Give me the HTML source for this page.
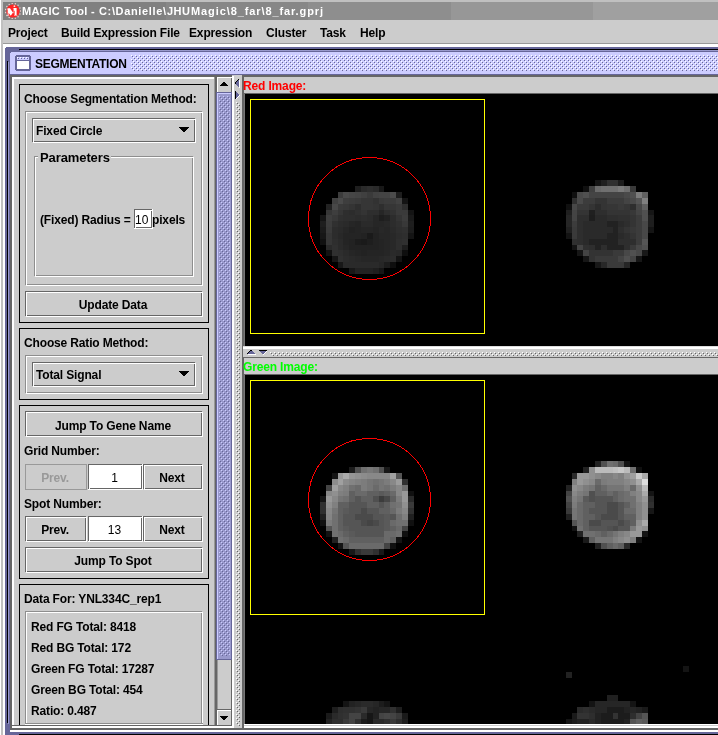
<!DOCTYPE html>
<html><head><meta charset="utf-8"><style>
html,body{margin:0;padding:0;}
body{width:718px;height:735px;overflow:hidden;position:relative;background:#c0c0c0;font-family:"Liberation Sans",sans-serif;}
.a{position:absolute;}
.t{white-space:nowrap;will-change:transform;}
svg{display:block;}
</style></head><body>
<div class="a" style="left:0px;top:0px;width:1px;height:735px;background:#ffffff;"></div>
<div class="a" style="left:3px;top:2px;width:163px;height:18px;background:#808080;"></div>
<div class="a" style="left:166px;top:2px;width:142px;height:18px;background:#878787;"></div>
<div class="a" style="left:308px;top:2px;width:143px;height:18px;background:#8e8e8e;"></div>
<div class="a" style="left:451px;top:2px;width:142px;height:18px;background:#979797;"></div>
<div class="a" style="left:593px;top:2px;width:125px;height:18px;background:#a0a0a0;"></div>
<svg class="a" style="left:5px;top:3px" width="16" height="16" viewBox="0 0 16 16">
<circle cx="15.60" cy="8.00" r="0.75" fill="#f4c8c8"/><circle cx="14.94" cy="11.09" r="0.75" fill="#f4c8c8"/><circle cx="13.09" cy="13.65" r="0.75" fill="#f4c8c8"/><circle cx="10.35" cy="15.23" r="0.75" fill="#f4c8c8"/><circle cx="7.21" cy="15.56" r="0.75" fill="#f4c8c8"/><circle cx="4.20" cy="14.58" r="0.75" fill="#f4c8c8"/><circle cx="1.85" cy="12.47" r="0.75" fill="#f4c8c8"/><circle cx="0.57" cy="9.58" r="0.75" fill="#f4c8c8"/><circle cx="0.57" cy="6.42" r="0.75" fill="#f4c8c8"/><circle cx="1.85" cy="3.53" r="0.75" fill="#f4c8c8"/><circle cx="4.20" cy="1.42" r="0.75" fill="#f4c8c8"/><circle cx="7.21" cy="0.44" r="0.75" fill="#f4c8c8"/><circle cx="10.35" cy="0.77" r="0.75" fill="#f4c8c8"/><circle cx="13.09" cy="2.35" r="0.75" fill="#f4c8c8"/><circle cx="14.94" cy="4.91" r="0.75" fill="#f4c8c8"/>
<circle cx="8" cy="8" r="6.6" fill="#ff2424"/>
<path d="M2.6 5.2h2.4l3.6 5.2v-5.2h-0.8v-0.1h3.8v6.9h0.8v0.6h-3.4v-0.6h0.6v-4.6l-0.1 0l-3.6 5.2h-0.4l-1.9-2.8v2.2h0.7v0.6h-2.2v-0.6h0.6v-5.6h-0.5z" fill="#fff"/>
<circle cx="9.4" cy="3.2" r="0.9" fill="#ffe0d0"/>
</svg>
<div class="a t" style="left:22px;top:5px;font-size:11px;line-height:13px;font-weight:bold;color:#fff;letter-spacing:0.25px;">MAGIC</div>
<div class="a t" style="left:64px;top:5px;font-size:11px;line-height:13px;font-weight:bold;color:#fff;letter-spacing:0.33px;">Tool</div>
<div class="a t" style="left:91px;top:5px;font-size:11px;line-height:13px;font-weight:bold;color:#fff;letter-spacing:0px;">-</div>
<div class="a t" style="left:99px;top:5px;font-size:11px;line-height:13px;font-weight:bold;color:#fff;letter-spacing:0.64px;">C:\Danielle\</div>
<div class="a t" style="left:167px;top:5px;font-size:11px;line-height:13px;font-weight:bold;color:#fff;letter-spacing:0.5px;">JHU</div>
<div class="a t" style="left:191px;top:5px;font-size:11px;line-height:13px;font-weight:bold;color:#fff;letter-spacing:0.9px;">Magic\8_far\8_far.gprj</div>
<div class="a" style="left:3px;top:20px;width:715px;height:23px;background:#cccccc;"></div>
<div class="a" style="left:3px;top:43px;width:715px;height:1px;background:#999999;"></div>
<div class="a t" style="left:8px;top:26px;font-size:12px;line-height:14px;font-weight:bold;color:#000;letter-spacing:-0.15px;">Project</div>
<div class="a t" style="left:61px;top:26px;font-size:12px;line-height:14px;font-weight:bold;color:#000;letter-spacing:-0.15px;">Build Expression File</div>
<div class="a t" style="left:189px;top:26px;font-size:12px;line-height:14px;font-weight:bold;color:#000;letter-spacing:-0.15px;">Expression</div>
<div class="a t" style="left:266px;top:26px;font-size:12px;line-height:14px;font-weight:bold;color:#000;letter-spacing:-0.15px;">Cluster</div>
<div class="a t" style="left:320px;top:26px;font-size:12px;line-height:14px;font-weight:bold;color:#000;letter-spacing:-0.15px;">Task</div>
<div class="a t" style="left:360px;top:26px;font-size:12px;line-height:14px;font-weight:bold;color:#000;letter-spacing:-0.15px;">Help</div>
<div class="a" style="left:3px;top:44px;width:715px;height:691px;background:#ffffff;"></div>
<div class="a" style="left:5px;top:47px;width:713px;height:688px;background:#666699;"></div>
<div class="a" style="left:5px;top:47px;width:1px;height:1px;background:#ffffff;"></div>
<div class="a" style="left:19px;top:49px;width:699px;height:1px;background:#000;"></div>
<div class="a" style="left:20px;top:50px;width:698px;height:1px;background:#9999cc;"></div>
<div class="a" style="left:7px;top:61px;width:1px;height:662px;background:#000;"></div>
<div class="a" style="left:8px;top:62px;width:1px;height:662px;background:#9999cc;"></div>
<div class="a" style="left:19px;top:734px;width:699px;height:1px;background:#000;"></div>
<div class="a" style="left:10px;top:52px;width:708px;height:23px;background:#ccccff;"></div>
<div class="a" style="left:10px;top:74px;width:708px;height:1px;background:#666699;"></div>
<div class="a" style="left:10px;top:52px;width:1px;height:1px;background:#666699;"></div>
<svg class="a" style="left:15px;top:55px" width="16" height="16" viewBox="0 0 16 16" shape-rendering="crispEdges">
<path d="M1 0h14v1h1v14h-1v1h-14v-1h-1v-14h1z" fill="#666699"/>
<rect x="2" y="2" width="12" height="3" fill="#ccccff"/>
<rect x="2" y="6" width="12" height="8" fill="#fff"/>
<rect x="2" y="2" width="1" height="1" fill="#fff"/><rect x="5" y="2" width="1" height="1" fill="#fff"/><rect x="8" y="2" width="1" height="1" fill="#fff"/><rect x="11" y="2" width="1" height="1" fill="#fff"/>
<rect x="3" y="3" width="1" height="1" fill="#666699"/><rect x="6" y="3" width="1" height="1" fill="#666699"/><rect x="9" y="3" width="1" height="1" fill="#666699"/><rect x="12" y="3" width="1" height="1" fill="#666699"/>
</svg>
<div class="a t" style="left:35px;top:57px;font-size:12px;line-height:14px;font-weight:bold;color:#000;letter-spacing:-0.27px;">SEGMENTATION</div>
<svg class="a" style="left:131px;top:55px" width="587" height="16" shape-rendering="crispEdges"><defs><pattern id="tb" width="4" height="4" patternUnits="userSpaceOnUse"><rect x="0" y="0" width="1" height="1" fill="#ffffff"/><rect x="2" y="2" width="1" height="1" fill="#ffffff"/><rect x="1" y="1" width="1" height="1" fill="#666699"/><rect x="3" y="3" width="1" height="1" fill="#666699"/></pattern></defs><rect width="587" height="16" fill="url(#tb)"/></svg>
<div class="a" style="left:10px;top:75px;width:708px;height:657px;background:#cccccc;"></div>
<div class="a" style="left:10px;top:75px;width:708px;height:1px;background:#666666;"></div>
<div class="a" style="left:10px;top:76px;width:708px;height:1px;background:#666666;"></div>
<div class="a" style="left:10px;top:75px;width:1px;height:655px;background:#666666;"></div>
<div class="a" style="left:11px;top:75px;width:1px;height:655px;background:#666666;"></div>
<div class="a" style="left:10px;top:728px;width:708px;height:1px;background:#666666;"></div>
<div class="a" style="left:10px;top:729px;width:708px;height:1px;background:#666666;"></div>
<div class="a" style="left:10px;top:730px;width:708px;height:1px;background:#ffffff;"></div>
<div class="a" style="left:10px;top:731px;width:708px;height:1px;background:#ffffff;"></div>
<div class="a" style="left:12px;top:77px;width:203px;height:1px;background:#ffffff;"></div>
<div class="a" style="left:12px;top:78px;width:203px;height:1px;background:#ffffff;"></div>
<div class="a" style="left:12px;top:77px;width:1px;height:651px;background:#ffffff;"></div>
<div class="a" style="left:13px;top:77px;width:1px;height:651px;background:#ffffff;"></div>
<div class="a" style="left:12px;top:725px;width:220px;height:1px;background:#666666;"></div>
<div class="a" style="left:12px;top:726px;width:706px;height:1px;background:#ffffff;"></div>
<div class="a" style="left:12px;top:727px;width:706px;height:1px;background:#ffffff;"></div>
<div class="a" style="left:19px;top:84px;width:190px;height:1px;background:#000;"></div>
<div class="a" style="left:19px;top:322px;width:190px;height:1px;background:#000;"></div>
<div class="a" style="left:19px;top:84px;width:1px;height:239px;background:#000;"></div>
<div class="a" style="left:208px;top:84px;width:1px;height:239px;background:#000;"></div>
<div class="a t" style="left:24px;top:92px;font-size:12px;line-height:14px;font-weight:bold;color:#000;letter-spacing:-0.15px;">Choose Segmentation Method:</div>
<div class="a" style="left:25px;top:111px;width:177px;height:1px;background:#8e8e8e;"></div>
<div class="a" style="left:25px;top:284px;width:177px;height:1px;background:#8e8e8e;"></div>
<div class="a" style="left:25px;top:111px;width:1px;height:174px;background:#8e8e8e;"></div>
<div class="a" style="left:201px;top:111px;width:1px;height:174px;background:#8e8e8e;"></div>
<div class="a" style="left:26px;top:112px;width:177px;height:1px;background:#ffffff;"></div>
<div class="a" style="left:26px;top:285px;width:177px;height:1px;background:#ffffff;"></div>
<div class="a" style="left:26px;top:112px;width:1px;height:174px;background:#ffffff;"></div>
<div class="a" style="left:202px;top:112px;width:1px;height:174px;background:#ffffff;"></div>
<div class="a" style="left:32px;top:118px;width:163px;height:1px;background:#666666;"></div>
<div class="a" style="left:32px;top:141px;width:163px;height:1px;background:#666666;"></div>
<div class="a" style="left:32px;top:118px;width:1px;height:24px;background:#666666;"></div>
<div class="a" style="left:194px;top:118px;width:1px;height:24px;background:#666666;"></div>
<div class="a" style="left:33px;top:119px;width:163px;height:1px;background:#ffffff;"></div>
<div class="a" style="left:33px;top:142px;width:163px;height:1px;background:#ffffff;"></div>
<div class="a" style="left:33px;top:119px;width:1px;height:24px;background:#ffffff;"></div>
<div class="a" style="left:195px;top:119px;width:1px;height:24px;background:#ffffff;"></div>
<div class="a t" style="left:36px;top:124px;font-size:12px;line-height:14px;font-weight:bold;color:#000;letter-spacing:-0.15px;">Fixed Circle</div>
<div class="a" style="left:179px;top:127px;width:10px;height:1px;background:#000;"></div>
<div class="a" style="left:180px;top:128px;width:8px;height:1px;background:#000;"></div>
<div class="a" style="left:181px;top:129px;width:6px;height:1px;background:#000;"></div>
<div class="a" style="left:182px;top:130px;width:4px;height:1px;background:#000;"></div>
<div class="a" style="left:183px;top:131px;width:2px;height:1px;background:#000;"></div>
<div class="a" style="left:34px;top:156px;width:159px;height:1px;background:#8e8e8e;"></div>
<div class="a" style="left:34px;top:275px;width:159px;height:1px;background:#8e8e8e;"></div>
<div class="a" style="left:34px;top:156px;width:1px;height:120px;background:#8e8e8e;"></div>
<div class="a" style="left:192px;top:156px;width:1px;height:120px;background:#8e8e8e;"></div>
<div class="a" style="left:35px;top:157px;width:159px;height:1px;background:#ffffff;"></div>
<div class="a" style="left:35px;top:276px;width:159px;height:1px;background:#ffffff;"></div>
<div class="a" style="left:35px;top:157px;width:1px;height:120px;background:#ffffff;"></div>
<div class="a" style="left:193px;top:157px;width:1px;height:120px;background:#ffffff;"></div>
<div class="a" style="left:38px;top:150px;width:73px;height:12px;background:#cccccc;"></div>
<div class="a t" style="left:40px;top:150px;font-size:13px;line-height:15px;font-weight:bold;color:#000;letter-spacing:-0.1px;">Parameters</div>
<div class="a t" style="left:40px;top:213px;font-size:12px;line-height:14px;font-weight:bold;color:#000;letter-spacing:-0.15px;">(Fixed) Radius = </div>
<div class="a" style="left:134px;top:209px;width:19px;height:20px;background:#ffffff;"></div>
<div class="a" style="left:134px;top:209px;width:18px;height:1px;background:#666666;"></div>
<div class="a" style="left:134px;top:227px;width:18px;height:1px;background:#666666;"></div>
<div class="a" style="left:134px;top:209px;width:1px;height:19px;background:#666666;"></div>
<div class="a" style="left:151px;top:209px;width:1px;height:19px;background:#666666;"></div>
<div class="a" style="left:135px;top:210px;width:18px;height:1px;background:#ffffff;"></div>
<div class="a" style="left:135px;top:228px;width:18px;height:1px;background:#ffffff;"></div>
<div class="a" style="left:135px;top:210px;width:1px;height:19px;background:#ffffff;"></div>
<div class="a" style="left:152px;top:210px;width:1px;height:19px;background:#ffffff;"></div>
<div class="a t" style="left:135px;top:213px;font-size:12px;line-height:14px;font-weight:normal;color:#000;letter-spacing:0px;">10</div>
<div class="a t" style="left:152px;top:213px;font-size:12px;line-height:14px;font-weight:bold;color:#000;letter-spacing:-0.15px;">pixels</div>
<div class="a" style="left:25px;top:291px;width:177px;height:1px;background:#666666;"></div>
<div class="a" style="left:25px;top:315px;width:177px;height:1px;background:#666666;"></div>
<div class="a" style="left:25px;top:291px;width:1px;height:25px;background:#666666;"></div>
<div class="a" style="left:201px;top:291px;width:1px;height:25px;background:#666666;"></div>
<div class="a" style="left:26px;top:292px;width:177px;height:1px;background:#ffffff;"></div>
<div class="a" style="left:26px;top:316px;width:177px;height:1px;background:#ffffff;"></div>
<div class="a" style="left:26px;top:292px;width:1px;height:25px;background:#ffffff;"></div>
<div class="a" style="left:202px;top:292px;width:1px;height:25px;background:#ffffff;"></div>
<div class="a t" style="left:24px;width:178px;text-align:center;top:298px;font-size:12px;line-height:14px;font-weight:bold;color:#000;letter-spacing:-0.15px;">Update Data</div>
<div class="a" style="left:19px;top:328px;width:190px;height:1px;background:#000;"></div>
<div class="a" style="left:19px;top:399px;width:190px;height:1px;background:#000;"></div>
<div class="a" style="left:19px;top:328px;width:1px;height:72px;background:#000;"></div>
<div class="a" style="left:208px;top:328px;width:1px;height:72px;background:#000;"></div>
<div class="a t" style="left:24px;top:336px;font-size:12px;line-height:14px;font-weight:bold;color:#000;letter-spacing:-0.15px;">Choose Ratio Method:</div>
<div class="a" style="left:25px;top:355px;width:177px;height:1px;background:#8e8e8e;"></div>
<div class="a" style="left:25px;top:392px;width:177px;height:1px;background:#8e8e8e;"></div>
<div class="a" style="left:25px;top:355px;width:1px;height:38px;background:#8e8e8e;"></div>
<div class="a" style="left:201px;top:355px;width:1px;height:38px;background:#8e8e8e;"></div>
<div class="a" style="left:26px;top:356px;width:177px;height:1px;background:#ffffff;"></div>
<div class="a" style="left:26px;top:393px;width:177px;height:1px;background:#ffffff;"></div>
<div class="a" style="left:26px;top:356px;width:1px;height:38px;background:#ffffff;"></div>
<div class="a" style="left:202px;top:356px;width:1px;height:38px;background:#ffffff;"></div>
<div class="a" style="left:32px;top:362px;width:163px;height:1px;background:#666666;"></div>
<div class="a" style="left:32px;top:385px;width:163px;height:1px;background:#666666;"></div>
<div class="a" style="left:32px;top:362px;width:1px;height:24px;background:#666666;"></div>
<div class="a" style="left:194px;top:362px;width:1px;height:24px;background:#666666;"></div>
<div class="a" style="left:33px;top:363px;width:163px;height:1px;background:#ffffff;"></div>
<div class="a" style="left:33px;top:386px;width:163px;height:1px;background:#ffffff;"></div>
<div class="a" style="left:33px;top:363px;width:1px;height:24px;background:#ffffff;"></div>
<div class="a" style="left:195px;top:363px;width:1px;height:24px;background:#ffffff;"></div>
<div class="a t" style="left:36px;top:368px;font-size:12px;line-height:14px;font-weight:bold;color:#000;letter-spacing:-0.15px;">Total Signal</div>
<div class="a" style="left:179px;top:371px;width:10px;height:1px;background:#000;"></div>
<div class="a" style="left:180px;top:372px;width:8px;height:1px;background:#000;"></div>
<div class="a" style="left:181px;top:373px;width:6px;height:1px;background:#000;"></div>
<div class="a" style="left:182px;top:374px;width:4px;height:1px;background:#000;"></div>
<div class="a" style="left:183px;top:375px;width:2px;height:1px;background:#000;"></div>
<div class="a" style="left:19px;top:405px;width:190px;height:1px;background:#000;"></div>
<div class="a" style="left:19px;top:578px;width:190px;height:1px;background:#000;"></div>
<div class="a" style="left:19px;top:405px;width:1px;height:174px;background:#000;"></div>
<div class="a" style="left:208px;top:405px;width:1px;height:174px;background:#000;"></div>
<div class="a" style="left:25px;top:411px;width:177px;height:1px;background:#666666;"></div>
<div class="a" style="left:25px;top:435px;width:177px;height:1px;background:#666666;"></div>
<div class="a" style="left:25px;top:411px;width:1px;height:25px;background:#666666;"></div>
<div class="a" style="left:201px;top:411px;width:1px;height:25px;background:#666666;"></div>
<div class="a" style="left:26px;top:412px;width:177px;height:1px;background:#ffffff;"></div>
<div class="a" style="left:26px;top:436px;width:177px;height:1px;background:#ffffff;"></div>
<div class="a" style="left:26px;top:412px;width:1px;height:25px;background:#ffffff;"></div>
<div class="a" style="left:202px;top:412px;width:1px;height:25px;background:#ffffff;"></div>
<div class="a t" style="left:24px;width:178px;text-align:center;top:419px;font-size:12px;line-height:14px;font-weight:bold;color:#000;letter-spacing:-0.15px;">Jump To Gene Name</div>
<div class="a t" style="left:24px;top:444px;font-size:12px;line-height:14px;font-weight:bold;color:#000;letter-spacing:-0.15px;">Grid Number:</div>
<div class="a" style="left:25px;top:464px;width:62px;height:1px;background:#999999;"></div>
<div class="a" style="left:25px;top:489px;width:62px;height:1px;background:#999999;"></div>
<div class="a" style="left:25px;top:464px;width:1px;height:26px;background:#999999;"></div>
<div class="a" style="left:86px;top:464px;width:1px;height:26px;background:#999999;"></div>
<div class="a t" style="left:24px;width:62px;text-align:center;top:471px;font-size:12px;line-height:14px;font-weight:bold;color:#999999;letter-spacing:-0.15px;">Prev.</div>
<div class="a" style="left:88px;top:464px;width:55px;height:26px;background:#ffffff;"></div>
<div class="a" style="left:88px;top:464px;width:54px;height:1px;background:#666666;"></div>
<div class="a" style="left:88px;top:488px;width:54px;height:1px;background:#666666;"></div>
<div class="a" style="left:88px;top:464px;width:1px;height:25px;background:#666666;"></div>
<div class="a" style="left:141px;top:464px;width:1px;height:25px;background:#666666;"></div>
<div class="a" style="left:89px;top:465px;width:54px;height:1px;background:#ffffff;"></div>
<div class="a" style="left:89px;top:489px;width:54px;height:1px;background:#ffffff;"></div>
<div class="a" style="left:89px;top:465px;width:1px;height:25px;background:#ffffff;"></div>
<div class="a" style="left:142px;top:465px;width:1px;height:25px;background:#ffffff;"></div>
<div class="a t" style="left:87px;width:55px;text-align:center;top:471px;font-size:12px;line-height:14px;font-weight:normal;color:#000;letter-spacing:0px;">1</div>
<div class="a" style="left:143px;top:464px;width:59px;height:1px;background:#666666;"></div>
<div class="a" style="left:143px;top:488px;width:59px;height:1px;background:#666666;"></div>
<div class="a" style="left:143px;top:464px;width:1px;height:25px;background:#666666;"></div>
<div class="a" style="left:201px;top:464px;width:1px;height:25px;background:#666666;"></div>
<div class="a" style="left:144px;top:465px;width:59px;height:1px;background:#ffffff;"></div>
<div class="a" style="left:144px;top:489px;width:59px;height:1px;background:#ffffff;"></div>
<div class="a" style="left:144px;top:465px;width:1px;height:25px;background:#ffffff;"></div>
<div class="a" style="left:202px;top:465px;width:1px;height:25px;background:#ffffff;"></div>
<div class="a t" style="left:142px;width:60px;text-align:center;top:471px;font-size:12px;line-height:14px;font-weight:bold;color:#000;letter-spacing:-0.15px;">Next</div>
<div class="a t" style="left:24px;top:497px;font-size:12px;line-height:14px;font-weight:bold;color:#000;letter-spacing:-0.15px;">Spot Number:</div>
<div class="a" style="left:25px;top:516px;width:61px;height:1px;background:#666666;"></div>
<div class="a" style="left:25px;top:540px;width:61px;height:1px;background:#666666;"></div>
<div class="a" style="left:25px;top:516px;width:1px;height:25px;background:#666666;"></div>
<div class="a" style="left:85px;top:516px;width:1px;height:25px;background:#666666;"></div>
<div class="a" style="left:26px;top:517px;width:61px;height:1px;background:#ffffff;"></div>
<div class="a" style="left:26px;top:541px;width:61px;height:1px;background:#ffffff;"></div>
<div class="a" style="left:26px;top:517px;width:1px;height:25px;background:#ffffff;"></div>
<div class="a" style="left:86px;top:517px;width:1px;height:25px;background:#ffffff;"></div>
<div class="a t" style="left:24px;width:62px;text-align:center;top:523px;font-size:12px;line-height:14px;font-weight:bold;color:#000;letter-spacing:-0.15px;">Prev.</div>
<div class="a" style="left:88px;top:516px;width:55px;height:26px;background:#ffffff;"></div>
<div class="a" style="left:88px;top:516px;width:54px;height:1px;background:#666666;"></div>
<div class="a" style="left:88px;top:540px;width:54px;height:1px;background:#666666;"></div>
<div class="a" style="left:88px;top:516px;width:1px;height:25px;background:#666666;"></div>
<div class="a" style="left:141px;top:516px;width:1px;height:25px;background:#666666;"></div>
<div class="a" style="left:89px;top:517px;width:54px;height:1px;background:#ffffff;"></div>
<div class="a" style="left:89px;top:541px;width:54px;height:1px;background:#ffffff;"></div>
<div class="a" style="left:89px;top:517px;width:1px;height:25px;background:#ffffff;"></div>
<div class="a" style="left:142px;top:517px;width:1px;height:25px;background:#ffffff;"></div>
<div class="a t" style="left:87px;width:55px;text-align:center;top:523px;font-size:12px;line-height:14px;font-weight:normal;color:#000;letter-spacing:0px;">13</div>
<div class="a" style="left:143px;top:516px;width:59px;height:1px;background:#666666;"></div>
<div class="a" style="left:143px;top:540px;width:59px;height:1px;background:#666666;"></div>
<div class="a" style="left:143px;top:516px;width:1px;height:25px;background:#666666;"></div>
<div class="a" style="left:201px;top:516px;width:1px;height:25px;background:#666666;"></div>
<div class="a" style="left:144px;top:517px;width:59px;height:1px;background:#ffffff;"></div>
<div class="a" style="left:144px;top:541px;width:59px;height:1px;background:#ffffff;"></div>
<div class="a" style="left:144px;top:517px;width:1px;height:25px;background:#ffffff;"></div>
<div class="a" style="left:202px;top:517px;width:1px;height:25px;background:#ffffff;"></div>
<div class="a t" style="left:142px;width:60px;text-align:center;top:523px;font-size:12px;line-height:14px;font-weight:bold;color:#000;letter-spacing:-0.15px;">Next</div>
<div class="a" style="left:25px;top:547px;width:177px;height:1px;background:#666666;"></div>
<div class="a" style="left:25px;top:571px;width:177px;height:1px;background:#666666;"></div>
<div class="a" style="left:25px;top:547px;width:1px;height:25px;background:#666666;"></div>
<div class="a" style="left:201px;top:547px;width:1px;height:25px;background:#666666;"></div>
<div class="a" style="left:26px;top:548px;width:177px;height:1px;background:#ffffff;"></div>
<div class="a" style="left:26px;top:572px;width:177px;height:1px;background:#ffffff;"></div>
<div class="a" style="left:26px;top:548px;width:1px;height:25px;background:#ffffff;"></div>
<div class="a" style="left:202px;top:548px;width:1px;height:25px;background:#ffffff;"></div>
<div class="a t" style="left:24px;width:178px;text-align:center;top:554px;font-size:12px;line-height:14px;font-weight:bold;color:#000;letter-spacing:-0.15px;">Jump To Spot</div>
<div class="a" style="left:14px;top:584px;width:200px;height:141px;background:#cccccc;"></div>
<div class="a" style="left:19px;top:584px;width:190px;height:1px;background:#000;"></div>
<div class="a" style="left:19px;top:584px;width:1px;height:141px;background:#000;"></div>
<div class="a" style="left:208px;top:584px;width:1px;height:141px;background:#000;"></div>
<div class="a t" style="left:24px;top:592px;font-size:12px;line-height:14px;font-weight:bold;color:#000;letter-spacing:-0.15px;">Data For: YNL334C_rep1</div>
<div class="a" style="left:25px;top:611px;width:177px;height:1px;background:#8e8e8e;"></div>
<div class="a" style="left:25px;top:611px;width:1px;height:113px;background:#8e8e8e;"></div>
<div class="a" style="left:201px;top:611px;width:1px;height:113px;background:#8e8e8e;"></div>
<div class="a" style="left:26px;top:612px;width:177px;height:1px;background:#ffffff;"></div>
<div class="a" style="left:26px;top:612px;width:1px;height:113px;background:#ffffff;"></div>
<div class="a" style="left:202px;top:612px;width:1px;height:113px;background:#ffffff;"></div>
<div class="a" style="left:25px;top:723px;width:178px;height:1px;background:#8e8e8e;"></div>
<div class="a" style="left:25px;top:724px;width:178px;height:1px;background:#ffffff;"></div>
<div class="a t" style="left:31px;top:620px;font-size:12px;line-height:14px;font-weight:bold;color:#000;letter-spacing:-0.15px;">Red FG Total: 8418</div>
<div class="a t" style="left:31px;top:641px;font-size:12px;line-height:14px;font-weight:bold;color:#000;letter-spacing:-0.15px;">Red BG Total: 172</div>
<div class="a t" style="left:31px;top:662px;font-size:12px;line-height:14px;font-weight:bold;color:#000;letter-spacing:-0.15px;">Green FG Total: 17287</div>
<div class="a t" style="left:31px;top:683px;font-size:12px;line-height:14px;font-weight:bold;color:#000;letter-spacing:-0.15px;">Green BG Total: 454</div>
<div class="a t" style="left:31px;top:704px;font-size:12px;line-height:14px;font-weight:bold;color:#000;letter-spacing:-0.15px;">Ratio: 0.487</div>
<div class="a" style="left:12px;top:725px;width:220px;height:1px;background:#666666;"></div>
<div class="a" style="left:214px;top:77px;width:1px;height:648px;background:#999999;"></div>
<div class="a" style="left:215px;top:77px;width:1px;height:648px;background:#666666;"></div>
<div class="a" style="left:216px;top:77px;width:1px;height:648px;background:#666666;"></div>
<div class="a" style="left:217px;top:92px;width:1px;height:617px;background:#999999;"></div>
<div class="a" style="left:231px;top:78px;width:1px;height:647px;background:#666666;"></div>
<div class="a" style="left:217px;top:77px;width:14px;height:15px;background:#cccccc;"></div>
<div class="a" style="left:217px;top:77px;width:15px;height:1px;background:#ffffff;"></div>
<div class="a" style="left:217px;top:77px;width:1px;height:15px;background:#ffffff;"></div>
<div class="a" style="left:223px;top:82px;width:2px;height:1px;background:#000;"></div>
<div class="a" style="left:222px;top:83px;width:4px;height:1px;background:#000;"></div>
<div class="a" style="left:221px;top:84px;width:6px;height:1px;background:#000;"></div>
<div class="a" style="left:220px;top:85px;width:8px;height:1px;background:#000;"></div>
<div class="a" style="left:216px;top:92px;width:16px;height:568px;background:#9999cc;"></div>
<div class="a" style="left:216px;top:92px;width:16px;height:1px;background:#666699;"></div>
<div class="a" style="left:216px;top:659px;width:16px;height:1px;background:#666699;"></div>
<div class="a" style="left:216px;top:92px;width:1px;height:568px;background:#666699;"></div>
<div class="a" style="left:231px;top:92px;width:1px;height:568px;background:#666699;"></div>
<div class="a" style="left:217px;top:93px;width:14px;height:1px;background:#ccccff;"></div>
<div class="a" style="left:217px;top:93px;width:1px;height:566px;background:#ccccff;"></div>
<svg class="a" style="left:219px;top:96px" width="11" height="560" shape-rendering="crispEdges"><defs><pattern id="sb" width="4" height="4" patternUnits="userSpaceOnUse"><rect x="0" y="0" width="1" height="1" fill="#ccccff"/><rect x="2" y="2" width="1" height="1" fill="#ccccff"/><rect x="1" y="1" width="1" height="1" fill="#666699"/><rect x="3" y="3" width="1" height="1" fill="#666699"/></pattern></defs><rect width="11" height="560" fill="url(#sb)"/></svg>
<div class="a" style="left:217px;top:710px;width:14px;height:14px;background:#cccccc;"></div>
<div class="a" style="left:215px;top:709px;width:17px;height:1px;background:#666666;"></div>
<div class="a" style="left:217px;top:710px;width:14px;height:1px;background:#ffffff;"></div>
<div class="a" style="left:217px;top:710px;width:1px;height:15px;background:#ffffff;"></div>
<div class="a" style="left:220px;top:716px;width:8px;height:1px;background:#000;"></div>
<div class="a" style="left:221px;top:717px;width:6px;height:1px;background:#000;"></div>
<div class="a" style="left:222px;top:718px;width:4px;height:1px;background:#000;"></div>
<div class="a" style="left:223px;top:719px;width:2px;height:1px;background:#000;"></div>
<div class="a" style="left:232px;top:75px;width:10px;height:653px;background:#cccccc;"></div>
<div class="a" style="left:232px;top:76px;width:1px;height:652px;background:#ffffff;"></div>
<div class="a" style="left:233px;top:76px;width:1px;height:652px;background:#ffffff;"></div>
<svg class="a" style="left:236px;top:102px" width="4" height="624" shape-rendering="crispEdges"><defs><pattern id="dv" width="4" height="4" patternUnits="userSpaceOnUse"><rect x="0" y="0" width="1" height="1" fill="#ffffff"/><rect x="2" y="2" width="1" height="1" fill="#ffffff"/><rect x="1" y="1" width="1" height="1" fill="#666666"/><rect x="3" y="3" width="1" height="1" fill="#666666"/></pattern></defs><rect width="4" height="624" fill="url(#dv)"/></svg>
<div class="a" style="left:235px;top:82px;width:1px;height:1px;background:#000;"></div>
<div class="a" style="left:235px;top:83px;width:1px;height:1px;background:#000;"></div>
<div class="a" style="left:236px;top:81px;width:1px;height:1px;background:#000;"></div>
<div class="a" style="left:236px;top:82px;width:1px;height:1px;background:#666699;"></div>
<div class="a" style="left:236px;top:83px;width:1px;height:1px;background:#666699;"></div>
<div class="a" style="left:236px;top:84px;width:1px;height:1px;background:#666699;"></div>
<div class="a" style="left:237px;top:80px;width:1px;height:1px;background:#000;"></div>
<div class="a" style="left:237px;top:81px;width:1px;height:1px;background:#666699;"></div>
<div class="a" style="left:237px;top:82px;width:1px;height:1px;background:#666699;"></div>
<div class="a" style="left:237px;top:83px;width:1px;height:1px;background:#666699;"></div>
<div class="a" style="left:237px;top:84px;width:1px;height:1px;background:#666699;"></div>
<div class="a" style="left:237px;top:85px;width:1px;height:1px;background:#666699;"></div>
<div class="a" style="left:238px;top:79px;width:1px;height:1px;background:#000;"></div>
<div class="a" style="left:238px;top:80px;width:1px;height:1px;background:#666699;"></div>
<div class="a" style="left:238px;top:81px;width:1px;height:1px;background:#666699;"></div>
<div class="a" style="left:238px;top:82px;width:1px;height:1px;background:#666699;"></div>
<div class="a" style="left:238px;top:83px;width:1px;height:1px;background:#666699;"></div>
<div class="a" style="left:238px;top:84px;width:1px;height:1px;background:#666699;"></div>
<div class="a" style="left:238px;top:85px;width:1px;height:1px;background:#666699;"></div>
<div class="a" style="left:238px;top:86px;width:1px;height:1px;background:#666699;"></div>
<div class="a" style="left:239px;top:80px;width:1px;height:1px;background:#ffffff;"></div>
<div class="a" style="left:239px;top:81px;width:1px;height:1px;background:#ffffff;"></div>
<div class="a" style="left:239px;top:82px;width:1px;height:1px;background:#ffffff;"></div>
<div class="a" style="left:239px;top:83px;width:1px;height:1px;background:#ffffff;"></div>
<div class="a" style="left:239px;top:84px;width:1px;height:1px;background:#ffffff;"></div>
<div class="a" style="left:239px;top:85px;width:1px;height:1px;background:#ffffff;"></div>
<div class="a" style="left:239px;top:86px;width:1px;height:1px;background:#ffffff;"></div>
<div class="a" style="left:239px;top:87px;width:1px;height:1px;background:#ffffff;"></div>
<div class="a" style="left:235px;top:91px;width:1px;height:1px;background:#000;"></div>
<div class="a" style="left:235px;top:92px;width:1px;height:1px;background:#000;"></div>
<div class="a" style="left:235px;top:93px;width:1px;height:1px;background:#000;"></div>
<div class="a" style="left:235px;top:94px;width:1px;height:1px;background:#000;"></div>
<div class="a" style="left:235px;top:95px;width:1px;height:1px;background:#000;"></div>
<div class="a" style="left:235px;top:96px;width:1px;height:1px;background:#000;"></div>
<div class="a" style="left:235px;top:97px;width:1px;height:1px;background:#000;"></div>
<div class="a" style="left:235px;top:98px;width:1px;height:1px;background:#000;"></div>
<div class="a" style="left:236px;top:92px;width:1px;height:1px;background:#666699;"></div>
<div class="a" style="left:236px;top:93px;width:1px;height:1px;background:#666699;"></div>
<div class="a" style="left:236px;top:94px;width:1px;height:1px;background:#666699;"></div>
<div class="a" style="left:236px;top:95px;width:1px;height:1px;background:#666699;"></div>
<div class="a" style="left:236px;top:96px;width:1px;height:1px;background:#666699;"></div>
<div class="a" style="left:236px;top:97px;width:1px;height:1px;background:#666699;"></div>
<div class="a" style="left:236px;top:98px;width:1px;height:1px;background:#ffffff;"></div>
<div class="a" style="left:237px;top:93px;width:1px;height:1px;background:#666699;"></div>
<div class="a" style="left:237px;top:94px;width:1px;height:1px;background:#666699;"></div>
<div class="a" style="left:237px;top:95px;width:1px;height:1px;background:#666699;"></div>
<div class="a" style="left:237px;top:96px;width:1px;height:1px;background:#666699;"></div>
<div class="a" style="left:237px;top:97px;width:1px;height:1px;background:#ffffff;"></div>
<div class="a" style="left:238px;top:94px;width:1px;height:1px;background:#666699;"></div>
<div class="a" style="left:238px;top:95px;width:1px;height:1px;background:#666699;"></div>
<div class="a" style="left:238px;top:96px;width:1px;height:1px;background:#ffffff;"></div>
<div class="a" style="left:239px;top:95px;width:1px;height:1px;background:#ffffff;"></div>
<div class="a" style="left:242px;top:75px;width:1px;height:655px;background:#666666;"></div>
<div class="a" style="left:243px;top:75px;width:1px;height:655px;background:#666666;"></div>
<div class="a" style="left:244px;top:77px;width:474px;height:16px;background:#cccccc;"></div>
<div class="a t" style="left:243px;top:79px;font-size:12px;line-height:14px;font-weight:bold;color:#ff0000;letter-spacing:-0.15px;">Red Image:</div>
<div class="a" style="left:244px;top:93px;width:474px;height:253px;background:#000;"></div>
<div class="a" style="left:243px;top:93px;width:475px;height:1px;background:#666666;"></div>
<div class="a" style="left:244px;top:94px;width:1px;height:252px;background:#777777;"></div>
<div class="a" style="left:243px;top:346px;width:475px;height:12px;background:#cccccc;"></div>
<div class="a" style="left:243px;top:346px;width:475px;height:1px;background:#dddddd;"></div>
<div class="a" style="left:243px;top:347px;width:475px;height:1px;background:#ffffff;"></div>
<div class="a" style="left:243px;top:348px;width:475px;height:1px;background:#ffffff;"></div>
<div class="a" style="left:243px;top:357px;width:475px;height:1px;background:#666666;"></div>
<div class="a" style="left:250px;top:350px;width:1px;height:1px;background:#000;"></div>
<div class="a" style="left:251px;top:350px;width:1px;height:1px;background:#000;"></div>
<div class="a" style="left:249px;top:351px;width:1px;height:1px;background:#000;"></div>
<div class="a" style="left:250px;top:351px;width:1px;height:1px;background:#666699;"></div>
<div class="a" style="left:251px;top:351px;width:1px;height:1px;background:#666699;"></div>
<div class="a" style="left:252px;top:351px;width:1px;height:1px;background:#666699;"></div>
<div class="a" style="left:248px;top:352px;width:1px;height:1px;background:#000;"></div>
<div class="a" style="left:249px;top:352px;width:1px;height:1px;background:#666699;"></div>
<div class="a" style="left:250px;top:352px;width:1px;height:1px;background:#666699;"></div>
<div class="a" style="left:251px;top:352px;width:1px;height:1px;background:#666699;"></div>
<div class="a" style="left:252px;top:352px;width:1px;height:1px;background:#666699;"></div>
<div class="a" style="left:253px;top:352px;width:1px;height:1px;background:#666699;"></div>
<div class="a" style="left:247px;top:353px;width:1px;height:1px;background:#000;"></div>
<div class="a" style="left:248px;top:353px;width:1px;height:1px;background:#666699;"></div>
<div class="a" style="left:249px;top:353px;width:1px;height:1px;background:#666699;"></div>
<div class="a" style="left:250px;top:353px;width:1px;height:1px;background:#666699;"></div>
<div class="a" style="left:251px;top:353px;width:1px;height:1px;background:#666699;"></div>
<div class="a" style="left:252px;top:353px;width:1px;height:1px;background:#666699;"></div>
<div class="a" style="left:253px;top:353px;width:1px;height:1px;background:#666699;"></div>
<div class="a" style="left:254px;top:353px;width:1px;height:1px;background:#666699;"></div>
<div class="a" style="left:248px;top:354px;width:1px;height:1px;background:#ffffff;"></div>
<div class="a" style="left:249px;top:354px;width:1px;height:1px;background:#ffffff;"></div>
<div class="a" style="left:250px;top:354px;width:1px;height:1px;background:#ffffff;"></div>
<div class="a" style="left:251px;top:354px;width:1px;height:1px;background:#ffffff;"></div>
<div class="a" style="left:252px;top:354px;width:1px;height:1px;background:#ffffff;"></div>
<div class="a" style="left:253px;top:354px;width:1px;height:1px;background:#ffffff;"></div>
<div class="a" style="left:254px;top:354px;width:1px;height:1px;background:#ffffff;"></div>
<div class="a" style="left:255px;top:354px;width:1px;height:1px;background:#ffffff;"></div>
<div class="a" style="left:259px;top:350px;width:1px;height:1px;background:#000;"></div>
<div class="a" style="left:260px;top:350px;width:1px;height:1px;background:#000;"></div>
<div class="a" style="left:261px;top:350px;width:1px;height:1px;background:#000;"></div>
<div class="a" style="left:262px;top:350px;width:1px;height:1px;background:#000;"></div>
<div class="a" style="left:263px;top:350px;width:1px;height:1px;background:#000;"></div>
<div class="a" style="left:264px;top:350px;width:1px;height:1px;background:#000;"></div>
<div class="a" style="left:265px;top:350px;width:1px;height:1px;background:#000;"></div>
<div class="a" style="left:266px;top:350px;width:1px;height:1px;background:#000;"></div>
<div class="a" style="left:260px;top:351px;width:1px;height:1px;background:#666699;"></div>
<div class="a" style="left:261px;top:351px;width:1px;height:1px;background:#666699;"></div>
<div class="a" style="left:262px;top:351px;width:1px;height:1px;background:#666699;"></div>
<div class="a" style="left:263px;top:351px;width:1px;height:1px;background:#666699;"></div>
<div class="a" style="left:264px;top:351px;width:1px;height:1px;background:#666699;"></div>
<div class="a" style="left:265px;top:351px;width:1px;height:1px;background:#666699;"></div>
<div class="a" style="left:266px;top:351px;width:1px;height:1px;background:#ffffff;"></div>
<div class="a" style="left:261px;top:352px;width:1px;height:1px;background:#666699;"></div>
<div class="a" style="left:262px;top:352px;width:1px;height:1px;background:#666699;"></div>
<div class="a" style="left:263px;top:352px;width:1px;height:1px;background:#666699;"></div>
<div class="a" style="left:264px;top:352px;width:1px;height:1px;background:#666699;"></div>
<div class="a" style="left:265px;top:352px;width:1px;height:1px;background:#ffffff;"></div>
<div class="a" style="left:262px;top:353px;width:1px;height:1px;background:#666699;"></div>
<div class="a" style="left:263px;top:353px;width:1px;height:1px;background:#666699;"></div>
<div class="a" style="left:264px;top:353px;width:1px;height:1px;background:#ffffff;"></div>
<div class="a" style="left:263px;top:354px;width:1px;height:1px;background:#ffffff;"></div>
<svg class="a" style="left:270px;top:352px" width="448" height="4" shape-rendering="crispEdges"><defs><pattern id="hd" width="4" height="4" patternUnits="userSpaceOnUse"><rect x="0" y="0" width="1" height="1" fill="#ffffff"/><rect x="2" y="2" width="1" height="1" fill="#ffffff"/><rect x="1" y="1" width="1" height="1" fill="#666666"/><rect x="3" y="3" width="1" height="1" fill="#666666"/></pattern></defs><rect width="448" height="4" fill="url(#hd)"/></svg>
<div class="a" style="left:244px;top:358px;width:474px;height:16px;background:#cccccc;"></div>
<div class="a t" style="left:243px;top:360px;font-size:12px;line-height:14px;font-weight:bold;color:#00ff00;letter-spacing:-0.15px;">Green Image:</div>
<div class="a" style="left:244px;top:374px;width:474px;height:350px;background:#000;"></div>
<div class="a" style="left:243px;top:374px;width:475px;height:1px;background:#666666;"></div>
<div class="a" style="left:244px;top:375px;width:1px;height:349px;background:#777777;"></div>
<div class="a" style="left:244px;top:724px;width:474px;height:1px;background:#ffffff;"></div>
<svg class="a" style="left:244px;top:93px" width="474" height="253" shape-rendering="crispEdges"><rect x="111" y="93" width="6" height="6" fill="#1e1e1e"/><rect x="117" y="93" width="6" height="6" fill="#2a2a2a"/><rect x="123" y="93" width="6" height="6" fill="#2e2e2e"/><rect x="129" y="93" width="6" height="6" fill="#2a2a2a"/><rect x="135" y="93" width="5" height="6" fill="#181818"/><rect x="94" y="99" width="5" height="6" fill="#3c3c3c"/><rect x="99" y="99" width="6" height="6" fill="#4a4a4a"/><rect x="105" y="99" width="6" height="6" fill="#464646"/><rect x="111" y="99" width="6" height="6" fill="#444444"/><rect x="117" y="99" width="6" height="6" fill="#404040"/><rect x="123" y="99" width="6" height="6" fill="#3a3a3a"/><rect x="129" y="99" width="6" height="6" fill="#424242"/><rect x="135" y="99" width="5" height="6" fill="#444444"/><rect x="140" y="99" width="6" height="6" fill="#444444"/><rect x="146" y="99" width="6" height="6" fill="#4c4c4c"/><rect x="152" y="99" width="6" height="6" fill="#1e1e1e"/><rect x="88" y="105" width="6" height="6" fill="#404040"/><rect x="94" y="105" width="5" height="6" fill="#4a4a4a"/><rect x="99" y="105" width="6" height="6" fill="#3e3e3e"/><rect x="105" y="105" width="6" height="6" fill="#3c3c3c"/><rect x="111" y="105" width="6" height="6" fill="#3a3a3a"/><rect x="117" y="105" width="6" height="6" fill="#363636"/><rect x="123" y="105" width="6" height="6" fill="#363636"/><rect x="129" y="105" width="6" height="6" fill="#323232"/><rect x="135" y="105" width="5" height="6" fill="#3a3a3a"/><rect x="140" y="105" width="6" height="6" fill="#3c3c3c"/><rect x="146" y="105" width="6" height="6" fill="#3c3c3c"/><rect x="152" y="105" width="6" height="6" fill="#424242"/><rect x="158" y="105" width="6" height="6" fill="#141414"/><rect x="82" y="111" width="6" height="6" fill="#222222"/><rect x="88" y="111" width="6" height="6" fill="#484848"/><rect x="94" y="111" width="5" height="6" fill="#3a3a3a"/><rect x="99" y="111" width="6" height="6" fill="#383838"/><rect x="105" y="111" width="6" height="6" fill="#343434"/><rect x="111" y="111" width="6" height="6" fill="#2e2e2e"/><rect x="117" y="111" width="6" height="6" fill="#363636"/><rect x="123" y="111" width="6" height="6" fill="#363636"/><rect x="129" y="111" width="6" height="6" fill="#343434"/><rect x="135" y="111" width="5" height="6" fill="#2e2e2e"/><rect x="140" y="111" width="6" height="6" fill="#363636"/><rect x="146" y="111" width="6" height="6" fill="#363636"/><rect x="152" y="111" width="6" height="6" fill="#3a3a3a"/><rect x="158" y="111" width="6" height="6" fill="#2e2e2e"/><rect x="82" y="117" width="6" height="5" fill="#363636"/><rect x="88" y="117" width="6" height="5" fill="#3e3e3e"/><rect x="94" y="117" width="5" height="5" fill="#363636"/><rect x="99" y="117" width="6" height="5" fill="#2e2e2e"/><rect x="105" y="117" width="6" height="5" fill="#2c2c2c"/><rect x="111" y="117" width="6" height="5" fill="#303030"/><rect x="117" y="117" width="6" height="5" fill="#343434"/><rect x="123" y="117" width="6" height="5" fill="#2e2e2e"/><rect x="129" y="117" width="6" height="5" fill="#2e2e2e"/><rect x="135" y="117" width="5" height="5" fill="#262626"/><rect x="140" y="117" width="6" height="5" fill="#2e2e2e"/><rect x="146" y="117" width="6" height="5" fill="#323232"/><rect x="152" y="117" width="6" height="5" fill="#3a3a3a"/><rect x="158" y="117" width="6" height="5" fill="#3a3a3a"/><rect x="164" y="117" width="6" height="5" fill="#141414"/><rect x="76" y="122" width="6" height="6" fill="#141414"/><rect x="82" y="122" width="6" height="6" fill="#3e3e3e"/><rect x="88" y="122" width="6" height="6" fill="#383838"/><rect x="94" y="122" width="5" height="6" fill="#303030"/><rect x="99" y="122" width="6" height="6" fill="#2e2e2e"/><rect x="105" y="122" width="6" height="6" fill="#2e2e2e"/><rect x="111" y="122" width="6" height="6" fill="#2c2c2c"/><rect x="117" y="122" width="6" height="6" fill="#2e2e2e"/><rect x="123" y="122" width="6" height="6" fill="#2c2c2c"/><rect x="129" y="122" width="6" height="6" fill="#262626"/><rect x="135" y="122" width="5" height="6" fill="#1e1e1e"/><rect x="140" y="122" width="6" height="6" fill="#222222"/><rect x="146" y="122" width="6" height="6" fill="#2c2c2c"/><rect x="152" y="122" width="6" height="6" fill="#343434"/><rect x="158" y="122" width="6" height="6" fill="#3c3c3c"/><rect x="164" y="122" width="6" height="6" fill="#1a1a1a"/><rect x="76" y="128" width="6" height="6" fill="#1e1e1e"/><rect x="82" y="128" width="6" height="6" fill="#3c3c3c"/><rect x="88" y="128" width="6" height="6" fill="#303030"/><rect x="94" y="128" width="5" height="6" fill="#2c2c2c"/><rect x="99" y="128" width="6" height="6" fill="#2a2a2a"/><rect x="105" y="128" width="6" height="6" fill="#262626"/><rect x="111" y="128" width="6" height="6" fill="#242424"/><rect x="117" y="128" width="6" height="6" fill="#2a2a2a"/><rect x="123" y="128" width="6" height="6" fill="#2a2a2a"/><rect x="129" y="128" width="6" height="6" fill="#262626"/><rect x="135" y="128" width="5" height="6" fill="#262626"/><rect x="140" y="128" width="6" height="6" fill="#282828"/><rect x="146" y="128" width="6" height="6" fill="#2c2c2c"/><rect x="152" y="128" width="6" height="6" fill="#303030"/><rect x="158" y="128" width="6" height="6" fill="#383838"/><rect x="164" y="128" width="6" height="6" fill="#1e1e1e"/><rect x="76" y="134" width="6" height="6" fill="#1a1a1a"/><rect x="82" y="134" width="6" height="6" fill="#3a3a3a"/><rect x="88" y="134" width="6" height="6" fill="#2c2c2c"/><rect x="94" y="134" width="5" height="6" fill="#2a2a2a"/><rect x="99" y="134" width="6" height="6" fill="#262626"/><rect x="105" y="134" width="6" height="6" fill="#222222"/><rect x="111" y="134" width="6" height="6" fill="#242424"/><rect x="117" y="134" width="6" height="6" fill="#262626"/><rect x="123" y="134" width="6" height="6" fill="#262626"/><rect x="129" y="134" width="6" height="6" fill="#242424"/><rect x="135" y="134" width="5" height="6" fill="#282828"/><rect x="140" y="134" width="6" height="6" fill="#262626"/><rect x="146" y="134" width="6" height="6" fill="#2a2a2a"/><rect x="152" y="134" width="6" height="6" fill="#2e2e2e"/><rect x="158" y="134" width="6" height="6" fill="#303030"/><rect x="164" y="134" width="6" height="6" fill="#1c1c1c"/><rect x="76" y="140" width="6" height="6" fill="#161616"/><rect x="82" y="140" width="6" height="6" fill="#363636"/><rect x="88" y="140" width="6" height="6" fill="#2c2c2c"/><rect x="94" y="140" width="5" height="6" fill="#282828"/><rect x="99" y="140" width="6" height="6" fill="#242424"/><rect x="105" y="140" width="6" height="6" fill="#242424"/><rect x="111" y="140" width="6" height="6" fill="#242424"/><rect x="117" y="140" width="6" height="6" fill="#222222"/><rect x="123" y="140" width="6" height="6" fill="#1a1a1a"/><rect x="129" y="140" width="6" height="6" fill="#222222"/><rect x="135" y="140" width="5" height="6" fill="#262626"/><rect x="140" y="140" width="6" height="6" fill="#262626"/><rect x="146" y="140" width="6" height="6" fill="#282828"/><rect x="152" y="140" width="6" height="6" fill="#2c2c2c"/><rect x="158" y="140" width="6" height="6" fill="#2e2e2e"/><rect x="164" y="140" width="6" height="6" fill="#141414"/><rect x="76" y="146" width="6" height="6" fill="#101010"/><rect x="82" y="146" width="6" height="6" fill="#363636"/><rect x="88" y="146" width="6" height="6" fill="#2e2e2e"/><rect x="94" y="146" width="5" height="6" fill="#2a2a2a"/><rect x="99" y="146" width="6" height="6" fill="#242424"/><rect x="105" y="146" width="6" height="6" fill="#222222"/><rect x="111" y="146" width="6" height="6" fill="#1c1c1c"/><rect x="117" y="146" width="6" height="6" fill="#1a1a1a"/><rect x="123" y="146" width="6" height="6" fill="#1e1e1e"/><rect x="129" y="146" width="6" height="6" fill="#222222"/><rect x="135" y="146" width="5" height="6" fill="#242424"/><rect x="140" y="146" width="6" height="6" fill="#262626"/><rect x="146" y="146" width="6" height="6" fill="#282828"/><rect x="152" y="146" width="6" height="6" fill="#2e2e2e"/><rect x="158" y="146" width="6" height="6" fill="#303030"/><rect x="82" y="152" width="6" height="5" fill="#2a2a2a"/><rect x="88" y="152" width="6" height="5" fill="#303030"/><rect x="94" y="152" width="5" height="5" fill="#2a2a2a"/><rect x="99" y="152" width="6" height="5" fill="#262626"/><rect x="105" y="152" width="6" height="5" fill="#222222"/><rect x="111" y="152" width="6" height="5" fill="#222222"/><rect x="117" y="152" width="6" height="5" fill="#222222"/><rect x="123" y="152" width="6" height="5" fill="#222222"/><rect x="129" y="152" width="6" height="5" fill="#222222"/><rect x="135" y="152" width="5" height="5" fill="#242424"/><rect x="140" y="152" width="6" height="5" fill="#262626"/><rect x="146" y="152" width="6" height="5" fill="#282828"/><rect x="152" y="152" width="6" height="5" fill="#2e2e2e"/><rect x="158" y="152" width="6" height="5" fill="#1e1e1e"/><rect x="82" y="157" width="6" height="6" fill="#121212"/><rect x="88" y="157" width="6" height="6" fill="#303030"/><rect x="94" y="157" width="5" height="6" fill="#2e2e2e"/><rect x="99" y="157" width="6" height="6" fill="#2a2a2a"/><rect x="105" y="157" width="6" height="6" fill="#262626"/><rect x="111" y="157" width="6" height="6" fill="#242424"/><rect x="117" y="157" width="6" height="6" fill="#222222"/><rect x="123" y="157" width="6" height="6" fill="#242424"/><rect x="129" y="157" width="6" height="6" fill="#242424"/><rect x="135" y="157" width="5" height="6" fill="#242424"/><rect x="140" y="157" width="6" height="6" fill="#262626"/><rect x="146" y="157" width="6" height="6" fill="#2a2a2a"/><rect x="152" y="157" width="6" height="6" fill="#282828"/><rect x="158" y="157" width="6" height="6" fill="#0e0e0e"/><rect x="88" y="163" width="6" height="6" fill="#161616"/><rect x="94" y="163" width="5" height="6" fill="#303030"/><rect x="99" y="163" width="6" height="6" fill="#2c2c2c"/><rect x="105" y="163" width="6" height="6" fill="#2a2a2a"/><rect x="111" y="163" width="6" height="6" fill="#282828"/><rect x="117" y="163" width="6" height="6" fill="#262626"/><rect x="123" y="163" width="6" height="6" fill="#262626"/><rect x="129" y="163" width="6" height="6" fill="#262626"/><rect x="135" y="163" width="5" height="6" fill="#282828"/><rect x="140" y="163" width="6" height="6" fill="#2a2a2a"/><rect x="146" y="163" width="6" height="6" fill="#2c2c2c"/><rect x="152" y="163" width="6" height="6" fill="#141414"/><rect x="94" y="169" width="5" height="6" fill="#181818"/><rect x="99" y="169" width="6" height="6" fill="#2a2a2a"/><rect x="105" y="169" width="6" height="6" fill="#2a2a2a"/><rect x="111" y="169" width="6" height="6" fill="#2a2a2a"/><rect x="117" y="169" width="6" height="6" fill="#2a2a2a"/><rect x="123" y="169" width="6" height="6" fill="#2a2a2a"/><rect x="129" y="169" width="6" height="6" fill="#2a2a2a"/><rect x="135" y="169" width="5" height="6" fill="#262626"/><rect x="140" y="169" width="6" height="6" fill="#1c1c1c"/><rect x="146" y="169" width="6" height="6" fill="#0e0e0e"/><rect x="105" y="175" width="6" height="6" fill="#181818"/><rect x="111" y="175" width="6" height="6" fill="#222222"/><rect x="117" y="175" width="6" height="6" fill="#222222"/><rect x="123" y="175" width="6" height="6" fill="#222222"/><rect x="129" y="175" width="6" height="6" fill="#1e1e1e"/><rect x="135" y="175" width="5" height="6" fill="#161616"/><rect x="351" y="87" width="6" height="6" fill="#141414"/><rect x="357" y="87" width="6" height="6" fill="#202020"/><rect x="363" y="87" width="6" height="6" fill="#303030"/><rect x="369" y="87" width="5" height="6" fill="#303030"/><rect x="374" y="87" width="6" height="6" fill="#1c1c1c"/><rect x="339" y="93" width="6" height="6" fill="#101010"/><rect x="345" y="93" width="6" height="6" fill="#404040"/><rect x="351" y="93" width="6" height="6" fill="#6a6a6a"/><rect x="357" y="93" width="6" height="6" fill="#707070"/><rect x="363" y="93" width="6" height="6" fill="#707070"/><rect x="369" y="93" width="5" height="6" fill="#707070"/><rect x="374" y="93" width="6" height="6" fill="#7a7a7a"/><rect x="380" y="93" width="6" height="6" fill="#6e6e6e"/><rect x="386" y="93" width="6" height="6" fill="#3a3a3a"/><rect x="328" y="99" width="5" height="6" fill="#101010"/><rect x="333" y="99" width="6" height="6" fill="#4a4a4a"/><rect x="339" y="99" width="6" height="6" fill="#505050"/><rect x="345" y="99" width="6" height="6" fill="#444444"/><rect x="351" y="99" width="6" height="6" fill="#444444"/><rect x="357" y="99" width="6" height="6" fill="#444444"/><rect x="363" y="99" width="6" height="6" fill="#444444"/><rect x="369" y="99" width="5" height="6" fill="#444444"/><rect x="374" y="99" width="6" height="6" fill="#444444"/><rect x="380" y="99" width="6" height="6" fill="#4a4a4a"/><rect x="386" y="99" width="6" height="6" fill="#505050"/><rect x="392" y="99" width="6" height="6" fill="#7c7c7c"/><rect x="398" y="99" width="6" height="6" fill="#606060"/><rect x="328" y="105" width="5" height="6" fill="#303030"/><rect x="333" y="105" width="6" height="6" fill="#4a4a4a"/><rect x="339" y="105" width="6" height="6" fill="#3c3c3c"/><rect x="345" y="105" width="6" height="6" fill="#3c3c3c"/><rect x="351" y="105" width="6" height="6" fill="#343434"/><rect x="357" y="105" width="6" height="6" fill="#343434"/><rect x="363" y="105" width="6" height="6" fill="#3c3c3c"/><rect x="369" y="105" width="5" height="6" fill="#3c3c3c"/><rect x="374" y="105" width="6" height="6" fill="#3c3c3c"/><rect x="380" y="105" width="6" height="6" fill="#444444"/><rect x="386" y="105" width="6" height="6" fill="#4a4a4a"/><rect x="392" y="105" width="6" height="6" fill="#555555"/><rect x="398" y="105" width="6" height="6" fill="#808080"/><rect x="322" y="111" width="6" height="6" fill="#101010"/><rect x="328" y="111" width="5" height="6" fill="#484848"/><rect x="333" y="111" width="6" height="6" fill="#3a3a3a"/><rect x="339" y="111" width="6" height="6" fill="#3a3a3a"/><rect x="345" y="111" width="6" height="6" fill="#343434"/><rect x="351" y="111" width="6" height="6" fill="#2c2c2c"/><rect x="357" y="111" width="6" height="6" fill="#343434"/><rect x="363" y="111" width="6" height="6" fill="#363636"/><rect x="369" y="111" width="5" height="6" fill="#363636"/><rect x="374" y="111" width="6" height="6" fill="#3a3a3a"/><rect x="380" y="111" width="6" height="6" fill="#363636"/><rect x="386" y="111" width="6" height="6" fill="#2e2e2e"/><rect x="392" y="111" width="6" height="6" fill="#484848"/><rect x="398" y="111" width="6" height="6" fill="#606060"/><rect x="322" y="117" width="6" height="5" fill="#202020"/><rect x="328" y="117" width="5" height="5" fill="#444444"/><rect x="333" y="117" width="6" height="5" fill="#343434"/><rect x="339" y="117" width="6" height="5" fill="#343434"/><rect x="345" y="117" width="6" height="5" fill="#202020"/><rect x="351" y="117" width="6" height="5" fill="#2e2e2e"/><rect x="357" y="117" width="6" height="5" fill="#2e2e2e"/><rect x="363" y="117" width="6" height="5" fill="#343434"/><rect x="369" y="117" width="5" height="5" fill="#343434"/><rect x="374" y="117" width="6" height="5" fill="#343434"/><rect x="380" y="117" width="6" height="5" fill="#343434"/><rect x="386" y="117" width="6" height="5" fill="#383838"/><rect x="392" y="117" width="6" height="5" fill="#444444"/><rect x="398" y="117" width="6" height="5" fill="#505050"/><rect x="404" y="117" width="6" height="5" fill="#161616"/><rect x="322" y="122" width="6" height="6" fill="#262626"/><rect x="328" y="122" width="5" height="6" fill="#444444"/><rect x="333" y="122" width="6" height="6" fill="#2e2e2e"/><rect x="339" y="122" width="6" height="6" fill="#2e2e2e"/><rect x="345" y="122" width="6" height="6" fill="#1e1e1e"/><rect x="351" y="122" width="6" height="6" fill="#2a2a2a"/><rect x="357" y="122" width="6" height="6" fill="#2a2a2a"/><rect x="363" y="122" width="6" height="6" fill="#2e2e2e"/><rect x="369" y="122" width="5" height="6" fill="#2e2e2e"/><rect x="374" y="122" width="6" height="6" fill="#303030"/><rect x="380" y="122" width="6" height="6" fill="#303030"/><rect x="386" y="122" width="6" height="6" fill="#343434"/><rect x="392" y="122" width="6" height="6" fill="#3c3c3c"/><rect x="398" y="122" width="6" height="6" fill="#505050"/><rect x="404" y="122" width="6" height="6" fill="#1e1e1e"/><rect x="322" y="128" width="6" height="6" fill="#262626"/><rect x="328" y="128" width="5" height="6" fill="#3c3c3c"/><rect x="333" y="128" width="6" height="6" fill="#2e2e2e"/><rect x="339" y="128" width="6" height="6" fill="#2a2a2a"/><rect x="345" y="128" width="6" height="6" fill="#2a2a2a"/><rect x="351" y="128" width="6" height="6" fill="#2a2a2a"/><rect x="357" y="128" width="6" height="6" fill="#2a2a2a"/><rect x="363" y="128" width="6" height="6" fill="#222222"/><rect x="369" y="128" width="5" height="6" fill="#222222"/><rect x="374" y="128" width="6" height="6" fill="#2a2a2a"/><rect x="380" y="128" width="6" height="6" fill="#2e2e2e"/><rect x="386" y="128" width="6" height="6" fill="#343434"/><rect x="392" y="128" width="6" height="6" fill="#3c3c3c"/><rect x="398" y="128" width="6" height="6" fill="#484848"/><rect x="404" y="128" width="6" height="6" fill="#1e1e1e"/><rect x="322" y="134" width="6" height="6" fill="#202020"/><rect x="328" y="134" width="5" height="6" fill="#3a3a3a"/><rect x="333" y="134" width="6" height="6" fill="#2e2e2e"/><rect x="339" y="134" width="6" height="6" fill="#2a2a2a"/><rect x="345" y="134" width="6" height="6" fill="#2a2a2a"/><rect x="351" y="134" width="6" height="6" fill="#2a2a2a"/><rect x="357" y="134" width="6" height="6" fill="#2a2a2a"/><rect x="363" y="134" width="6" height="6" fill="#2a2a2a"/><rect x="369" y="134" width="5" height="6" fill="#222222"/><rect x="374" y="134" width="6" height="6" fill="#2e2e2e"/><rect x="380" y="134" width="6" height="6" fill="#343434"/><rect x="386" y="134" width="6" height="6" fill="#383838"/><rect x="392" y="134" width="6" height="6" fill="#3c3c3c"/><rect x="398" y="134" width="6" height="6" fill="#484848"/><rect x="404" y="134" width="6" height="6" fill="#141414"/><rect x="322" y="140" width="6" height="6" fill="#141414"/><rect x="328" y="140" width="5" height="6" fill="#3a3a3a"/><rect x="333" y="140" width="6" height="6" fill="#2e2e2e"/><rect x="339" y="140" width="6" height="6" fill="#2a2a2a"/><rect x="345" y="140" width="6" height="6" fill="#2a2a2a"/><rect x="351" y="140" width="6" height="6" fill="#2a2a2a"/><rect x="357" y="140" width="6" height="6" fill="#2a2a2a"/><rect x="363" y="140" width="6" height="6" fill="#222222"/><rect x="369" y="140" width="5" height="6" fill="#222222"/><rect x="374" y="140" width="6" height="6" fill="#2a2a2a"/><rect x="380" y="140" width="6" height="6" fill="#2e2e2e"/><rect x="386" y="140" width="6" height="6" fill="#343434"/><rect x="392" y="140" width="6" height="6" fill="#3c3c3c"/><rect x="398" y="140" width="6" height="6" fill="#484848"/><rect x="328" y="146" width="5" height="6" fill="#303030"/><rect x="333" y="146" width="6" height="6" fill="#2e2e2e"/><rect x="339" y="146" width="6" height="6" fill="#2a2a2a"/><rect x="345" y="146" width="6" height="6" fill="#222222"/><rect x="351" y="146" width="6" height="6" fill="#222222"/><rect x="357" y="146" width="6" height="6" fill="#222222"/><rect x="363" y="146" width="6" height="6" fill="#222222"/><rect x="369" y="146" width="5" height="6" fill="#222222"/><rect x="374" y="146" width="6" height="6" fill="#2e2e2e"/><rect x="380" y="146" width="6" height="6" fill="#2e2e2e"/><rect x="386" y="146" width="6" height="6" fill="#2e2e2e"/><rect x="392" y="146" width="6" height="6" fill="#3c3c3c"/><rect x="398" y="146" width="6" height="6" fill="#555555"/><rect x="328" y="152" width="5" height="5" fill="#141414"/><rect x="333" y="152" width="6" height="5" fill="#444444"/><rect x="339" y="152" width="6" height="5" fill="#303030"/><rect x="345" y="152" width="6" height="5" fill="#2e2e2e"/><rect x="351" y="152" width="6" height="5" fill="#222222"/><rect x="357" y="152" width="6" height="5" fill="#2e2e2e"/><rect x="363" y="152" width="6" height="5" fill="#222222"/><rect x="369" y="152" width="5" height="5" fill="#222222"/><rect x="374" y="152" width="6" height="5" fill="#222222"/><rect x="380" y="152" width="6" height="5" fill="#2e2e2e"/><rect x="386" y="152" width="6" height="5" fill="#3a3a3a"/><rect x="392" y="152" width="6" height="5" fill="#484848"/><rect x="398" y="152" width="6" height="5" fill="#505050"/><rect x="333" y="157" width="6" height="6" fill="#161616"/><rect x="339" y="157" width="6" height="6" fill="#444444"/><rect x="345" y="157" width="6" height="6" fill="#333333"/><rect x="351" y="157" width="6" height="6" fill="#333333"/><rect x="357" y="157" width="6" height="6" fill="#333333"/><rect x="363" y="157" width="6" height="6" fill="#333333"/><rect x="369" y="157" width="5" height="6" fill="#3a3a3a"/><rect x="374" y="157" width="6" height="6" fill="#3a3a3a"/><rect x="380" y="157" width="6" height="6" fill="#484848"/><rect x="386" y="157" width="6" height="6" fill="#505050"/><rect x="392" y="157" width="6" height="6" fill="#484848"/><rect x="398" y="157" width="6" height="6" fill="#181818"/><rect x="339" y="163" width="6" height="6" fill="#161616"/><rect x="345" y="163" width="6" height="6" fill="#333333"/><rect x="351" y="163" width="6" height="6" fill="#3a3a3a"/><rect x="357" y="163" width="6" height="6" fill="#3a3a3a"/><rect x="363" y="163" width="6" height="6" fill="#3a3a3a"/><rect x="369" y="163" width="5" height="6" fill="#3a3a3a"/><rect x="374" y="163" width="6" height="6" fill="#444444"/><rect x="380" y="163" width="6" height="6" fill="#505050"/><rect x="386" y="163" width="6" height="6" fill="#444444"/><rect x="392" y="163" width="6" height="6" fill="#161616"/><rect x="351" y="169" width="6" height="6" fill="#181818"/><rect x="357" y="169" width="6" height="6" fill="#282828"/><rect x="363" y="169" width="6" height="6" fill="#3a3a3a"/><rect x="369" y="169" width="5" height="6" fill="#3a3a3a"/><rect x="374" y="169" width="6" height="6" fill="#3a3a3a"/><rect x="380" y="169" width="6" height="6" fill="#262626"/></svg>
<div class="a" style="left:250px;top:99px;width:235px;height:1px;background:#ffff00;"></div>
<div class="a" style="left:250px;top:333px;width:235px;height:1px;background:#ffff00;"></div>
<div class="a" style="left:250px;top:99px;width:1px;height:235px;background:#ffff00;"></div>
<div class="a" style="left:484px;top:99px;width:1px;height:235px;background:#ffff00;"></div>
<svg class="a" style="left:244px;top:93px" width="474" height="253"><circle cx="125.5" cy="125.5" r="61" fill="none" stroke="#ff0000" stroke-width="1" shape-rendering="crispEdges"/></svg>
<svg class="a" style="left:244px;top:374px" width="474" height="350" shape-rendering="crispEdges"><rect x="105" y="93" width="6" height="6" fill="#1c1c1c"/><rect x="111" y="93" width="6" height="6" fill="#505050"/><rect x="117" y="93" width="6" height="6" fill="#707070"/><rect x="123" y="93" width="6" height="6" fill="#787878"/><rect x="129" y="93" width="6" height="6" fill="#707070"/><rect x="135" y="93" width="5" height="6" fill="#505050"/><rect x="140" y="93" width="6" height="6" fill="#181818"/><rect x="88" y="99" width="6" height="6" fill="#141414"/><rect x="94" y="99" width="5" height="6" fill="#999999"/><rect x="99" y="99" width="6" height="6" fill="#aaaaaa"/><rect x="105" y="99" width="6" height="6" fill="#959595"/><rect x="111" y="99" width="6" height="6" fill="#909090"/><rect x="117" y="99" width="6" height="6" fill="#8c8c8c"/><rect x="123" y="99" width="6" height="6" fill="#888888"/><rect x="129" y="99" width="6" height="6" fill="#888888"/><rect x="135" y="99" width="5" height="6" fill="#888888"/><rect x="140" y="99" width="6" height="6" fill="#888888"/><rect x="146" y="99" width="6" height="6" fill="#a0a0a0"/><rect x="152" y="99" width="6" height="6" fill="#555555"/><rect x="88" y="105" width="6" height="6" fill="#8c8c8c"/><rect x="94" y="105" width="5" height="6" fill="#a0a0a0"/><rect x="99" y="105" width="6" height="6" fill="#8c8c8c"/><rect x="105" y="105" width="6" height="6" fill="#858585"/><rect x="111" y="105" width="6" height="6" fill="#808080"/><rect x="117" y="105" width="6" height="6" fill="#7c7c7c"/><rect x="123" y="105" width="6" height="6" fill="#757575"/><rect x="129" y="105" width="6" height="6" fill="#707070"/><rect x="135" y="105" width="5" height="6" fill="#757575"/><rect x="140" y="105" width="6" height="6" fill="#7c7c7c"/><rect x="146" y="105" width="6" height="6" fill="#888888"/><rect x="152" y="105" width="6" height="6" fill="#9c9c9c"/><rect x="158" y="105" width="6" height="6" fill="#303030"/><rect x="82" y="111" width="6" height="6" fill="#444444"/><rect x="88" y="111" width="6" height="6" fill="#a0a0a0"/><rect x="94" y="111" width="5" height="6" fill="#888888"/><rect x="99" y="111" width="6" height="6" fill="#808080"/><rect x="105" y="111" width="6" height="6" fill="#707070"/><rect x="111" y="111" width="6" height="6" fill="#6a6a6a"/><rect x="117" y="111" width="6" height="6" fill="#7c7c7c"/><rect x="123" y="111" width="6" height="6" fill="#757575"/><rect x="129" y="111" width="6" height="6" fill="#6a6a6a"/><rect x="135" y="111" width="5" height="6" fill="#757575"/><rect x="140" y="111" width="6" height="6" fill="#707070"/><rect x="146" y="111" width="6" height="6" fill="#7c7c7c"/><rect x="152" y="111" width="6" height="6" fill="#888888"/><rect x="158" y="111" width="6" height="6" fill="#707070"/><rect x="82" y="117" width="6" height="5" fill="#888888"/><rect x="88" y="117" width="6" height="5" fill="#909090"/><rect x="94" y="117" width="5" height="5" fill="#808080"/><rect x="99" y="117" width="6" height="5" fill="#7c7c7c"/><rect x="105" y="117" width="6" height="5" fill="#606060"/><rect x="111" y="117" width="6" height="5" fill="#6a6a6a"/><rect x="117" y="117" width="6" height="5" fill="#6a6a6a"/><rect x="123" y="117" width="6" height="5" fill="#606060"/><rect x="129" y="117" width="6" height="5" fill="#606060"/><rect x="135" y="117" width="5" height="5" fill="#5a5a5a"/><rect x="140" y="117" width="6" height="5" fill="#606060"/><rect x="146" y="117" width="6" height="5" fill="#6a6a6a"/><rect x="152" y="117" width="6" height="5" fill="#888888"/><rect x="158" y="117" width="6" height="5" fill="#999999"/><rect x="164" y="117" width="6" height="5" fill="#101010"/><rect x="76" y="122" width="6" height="6" fill="#141414"/><rect x="82" y="122" width="6" height="6" fill="#999999"/><rect x="88" y="122" width="6" height="6" fill="#888888"/><rect x="94" y="122" width="5" height="6" fill="#757575"/><rect x="99" y="122" width="6" height="6" fill="#707070"/><rect x="105" y="122" width="6" height="6" fill="#606060"/><rect x="111" y="122" width="6" height="6" fill="#555555"/><rect x="117" y="122" width="6" height="6" fill="#606060"/><rect x="123" y="122" width="6" height="6" fill="#606060"/><rect x="129" y="122" width="6" height="6" fill="#505050"/><rect x="135" y="122" width="5" height="6" fill="#3c3c3c"/><rect x="140" y="122" width="6" height="6" fill="#484848"/><rect x="146" y="122" width="6" height="6" fill="#606060"/><rect x="152" y="122" width="6" height="6" fill="#7c7c7c"/><rect x="158" y="122" width="6" height="6" fill="#999999"/><rect x="164" y="122" width="6" height="6" fill="#2a2a2a"/><rect x="76" y="128" width="6" height="6" fill="#303030"/><rect x="82" y="128" width="6" height="6" fill="#909090"/><rect x="88" y="128" width="6" height="6" fill="#808080"/><rect x="94" y="128" width="5" height="6" fill="#606060"/><rect x="99" y="128" width="6" height="6" fill="#606060"/><rect x="105" y="128" width="6" height="6" fill="#555555"/><rect x="111" y="128" width="6" height="6" fill="#555555"/><rect x="117" y="128" width="6" height="6" fill="#555555"/><rect x="123" y="128" width="6" height="6" fill="#606060"/><rect x="129" y="128" width="6" height="6" fill="#606060"/><rect x="135" y="128" width="5" height="6" fill="#555555"/><rect x="140" y="128" width="6" height="6" fill="#606060"/><rect x="146" y="128" width="6" height="6" fill="#707070"/><rect x="152" y="128" width="6" height="6" fill="#757575"/><rect x="158" y="128" width="6" height="6" fill="#909090"/><rect x="164" y="128" width="6" height="6" fill="#3a3a3a"/><rect x="76" y="134" width="6" height="6" fill="#303030"/><rect x="82" y="134" width="6" height="6" fill="#888888"/><rect x="88" y="134" width="6" height="6" fill="#757575"/><rect x="94" y="134" width="5" height="6" fill="#606060"/><rect x="99" y="134" width="6" height="6" fill="#5a5a5a"/><rect x="105" y="134" width="6" height="6" fill="#555555"/><rect x="111" y="134" width="6" height="6" fill="#555555"/><rect x="117" y="134" width="6" height="6" fill="#4a4a4a"/><rect x="123" y="134" width="6" height="6" fill="#555555"/><rect x="129" y="134" width="6" height="6" fill="#555555"/><rect x="135" y="134" width="5" height="6" fill="#606060"/><rect x="140" y="134" width="6" height="6" fill="#606060"/><rect x="146" y="134" width="6" height="6" fill="#6a6a6a"/><rect x="152" y="134" width="6" height="6" fill="#7c7c7c"/><rect x="158" y="134" width="6" height="6" fill="#888888"/><rect x="164" y="134" width="6" height="6" fill="#303030"/><rect x="76" y="140" width="6" height="6" fill="#202020"/><rect x="82" y="140" width="6" height="6" fill="#858585"/><rect x="88" y="140" width="6" height="6" fill="#707070"/><rect x="94" y="140" width="5" height="6" fill="#606060"/><rect x="99" y="140" width="6" height="6" fill="#555555"/><rect x="105" y="140" width="6" height="6" fill="#555555"/><rect x="111" y="140" width="6" height="6" fill="#4a4a4a"/><rect x="117" y="140" width="6" height="6" fill="#4a4a4a"/><rect x="123" y="140" width="6" height="6" fill="#4a4a4a"/><rect x="129" y="140" width="6" height="6" fill="#555555"/><rect x="135" y="140" width="5" height="6" fill="#555555"/><rect x="140" y="140" width="6" height="6" fill="#5a5a5a"/><rect x="146" y="140" width="6" height="6" fill="#555555"/><rect x="152" y="140" width="6" height="6" fill="#707070"/><rect x="158" y="140" width="6" height="6" fill="#808080"/><rect x="164" y="140" width="6" height="6" fill="#202020"/><rect x="76" y="146" width="6" height="6" fill="#101010"/><rect x="82" y="146" width="6" height="6" fill="#7c7c7c"/><rect x="88" y="146" width="6" height="6" fill="#707070"/><rect x="94" y="146" width="5" height="6" fill="#606060"/><rect x="99" y="146" width="6" height="6" fill="#555555"/><rect x="105" y="146" width="6" height="6" fill="#555555"/><rect x="111" y="146" width="6" height="6" fill="#555555"/><rect x="117" y="146" width="6" height="6" fill="#4a4a4a"/><rect x="123" y="146" width="6" height="6" fill="#444444"/><rect x="129" y="146" width="6" height="6" fill="#4a4a4a"/><rect x="135" y="146" width="5" height="6" fill="#555555"/><rect x="140" y="146" width="6" height="6" fill="#5a5a5a"/><rect x="146" y="146" width="6" height="6" fill="#6a6a6a"/><rect x="152" y="146" width="6" height="6" fill="#707070"/><rect x="158" y="146" width="6" height="6" fill="#707070"/><rect x="164" y="146" width="6" height="6" fill="#101010"/><rect x="82" y="152" width="6" height="5" fill="#555555"/><rect x="88" y="152" width="6" height="5" fill="#707070"/><rect x="94" y="152" width="5" height="5" fill="#606060"/><rect x="99" y="152" width="6" height="5" fill="#5a5a5a"/><rect x="105" y="152" width="6" height="5" fill="#555555"/><rect x="111" y="152" width="6" height="5" fill="#555555"/><rect x="117" y="152" width="6" height="5" fill="#555555"/><rect x="123" y="152" width="6" height="5" fill="#555555"/><rect x="129" y="152" width="6" height="5" fill="#555555"/><rect x="135" y="152" width="5" height="5" fill="#555555"/><rect x="140" y="152" width="6" height="5" fill="#5a5a5a"/><rect x="146" y="152" width="6" height="5" fill="#606060"/><rect x="152" y="152" width="6" height="5" fill="#6a6a6a"/><rect x="158" y="152" width="6" height="5" fill="#444444"/><rect x="82" y="157" width="6" height="6" fill="#121212"/><rect x="88" y="157" width="6" height="6" fill="#707070"/><rect x="94" y="157" width="5" height="6" fill="#6a6a6a"/><rect x="99" y="157" width="6" height="6" fill="#606060"/><rect x="105" y="157" width="6" height="6" fill="#5a5a5a"/><rect x="111" y="157" width="6" height="6" fill="#555555"/><rect x="117" y="157" width="6" height="6" fill="#555555"/><rect x="123" y="157" width="6" height="6" fill="#555555"/><rect x="129" y="157" width="6" height="6" fill="#555555"/><rect x="135" y="157" width="5" height="6" fill="#555555"/><rect x="140" y="157" width="6" height="6" fill="#6a6a6a"/><rect x="146" y="157" width="6" height="6" fill="#6a6a6a"/><rect x="152" y="157" width="6" height="6" fill="#707070"/><rect x="158" y="157" width="6" height="6" fill="#101010"/><rect x="88" y="163" width="6" height="6" fill="#202020"/><rect x="94" y="163" width="5" height="6" fill="#707070"/><rect x="99" y="163" width="6" height="6" fill="#6a6a6a"/><rect x="105" y="163" width="6" height="6" fill="#606060"/><rect x="111" y="163" width="6" height="6" fill="#606060"/><rect x="117" y="163" width="6" height="6" fill="#606060"/><rect x="123" y="163" width="6" height="6" fill="#606060"/><rect x="129" y="163" width="6" height="6" fill="#606060"/><rect x="135" y="163" width="5" height="6" fill="#606060"/><rect x="140" y="163" width="6" height="6" fill="#6a6a6a"/><rect x="146" y="163" width="6" height="6" fill="#606060"/><rect x="152" y="163" width="6" height="6" fill="#141414"/><rect x="94" y="169" width="5" height="6" fill="#141414"/><rect x="99" y="169" width="6" height="6" fill="#555555"/><rect x="105" y="169" width="6" height="6" fill="#6a6a6a"/><rect x="111" y="169" width="6" height="6" fill="#6a6a6a"/><rect x="117" y="169" width="6" height="6" fill="#6a6a6a"/><rect x="123" y="169" width="6" height="6" fill="#6a6a6a"/><rect x="129" y="169" width="6" height="6" fill="#6a6a6a"/><rect x="135" y="169" width="5" height="6" fill="#6a6a6a"/><rect x="140" y="169" width="6" height="6" fill="#444444"/><rect x="146" y="169" width="6" height="6" fill="#101010"/><rect x="105" y="175" width="6" height="6" fill="#181818"/><rect x="111" y="175" width="6" height="6" fill="#303030"/><rect x="117" y="175" width="6" height="6" fill="#3a3a3a"/><rect x="123" y="175" width="6" height="6" fill="#3a3a3a"/><rect x="129" y="175" width="6" height="6" fill="#303030"/><rect x="135" y="175" width="5" height="6" fill="#181818"/><rect x="351" y="87" width="6" height="6" fill="#222222"/><rect x="357" y="87" width="6" height="6" fill="#505050"/><rect x="363" y="87" width="6" height="6" fill="#707070"/><rect x="369" y="87" width="5" height="6" fill="#6a6a6a"/><rect x="374" y="87" width="6" height="6" fill="#505050"/><rect x="380" y="87" width="6" height="6" fill="#141414"/><rect x="339" y="93" width="6" height="6" fill="#222222"/><rect x="345" y="93" width="6" height="6" fill="#909090"/><rect x="351" y="93" width="6" height="6" fill="#bbbbbb"/><rect x="357" y="93" width="6" height="6" fill="#bbbbbb"/><rect x="363" y="93" width="6" height="6" fill="#bbbbbb"/><rect x="369" y="93" width="5" height="6" fill="#c0c0c0"/><rect x="374" y="93" width="6" height="6" fill="#c8c8c8"/><rect x="380" y="93" width="6" height="6" fill="#bbbbbb"/><rect x="386" y="93" width="6" height="6" fill="#707070"/><rect x="392" y="93" width="6" height="6" fill="#101010"/><rect x="328" y="99" width="5" height="6" fill="#2a2a2a"/><rect x="333" y="99" width="6" height="6" fill="#999999"/><rect x="339" y="99" width="6" height="6" fill="#999999"/><rect x="345" y="99" width="6" height="6" fill="#909090"/><rect x="351" y="99" width="6" height="6" fill="#888888"/><rect x="357" y="99" width="6" height="6" fill="#808080"/><rect x="363" y="99" width="6" height="6" fill="#808080"/><rect x="369" y="99" width="5" height="6" fill="#888888"/><rect x="374" y="99" width="6" height="6" fill="#808080"/><rect x="380" y="99" width="6" height="6" fill="#959595"/><rect x="386" y="99" width="6" height="6" fill="#a0a0a0"/><rect x="392" y="99" width="6" height="6" fill="#cccccc"/><rect x="398" y="99" width="6" height="6" fill="#aaaaaa"/><rect x="328" y="105" width="5" height="6" fill="#808080"/><rect x="333" y="105" width="6" height="6" fill="#999999"/><rect x="339" y="105" width="6" height="6" fill="#909090"/><rect x="345" y="105" width="6" height="6" fill="#888888"/><rect x="351" y="105" width="6" height="6" fill="#6a6a6a"/><rect x="357" y="105" width="6" height="6" fill="#7c7c7c"/><rect x="363" y="105" width="6" height="6" fill="#808080"/><rect x="369" y="105" width="5" height="6" fill="#808080"/><rect x="374" y="105" width="6" height="6" fill="#808080"/><rect x="380" y="105" width="6" height="6" fill="#888888"/><rect x="386" y="105" width="6" height="6" fill="#909090"/><rect x="392" y="105" width="6" height="6" fill="#aaaaaa"/><rect x="398" y="105" width="6" height="6" fill="#dddddd"/><rect x="322" y="111" width="6" height="6" fill="#222222"/><rect x="328" y="111" width="5" height="6" fill="#909090"/><rect x="333" y="111" width="6" height="6" fill="#888888"/><rect x="339" y="111" width="6" height="6" fill="#7c7c7c"/><rect x="345" y="111" width="6" height="6" fill="#757575"/><rect x="351" y="111" width="6" height="6" fill="#606060"/><rect x="357" y="111" width="6" height="6" fill="#6a6a6a"/><rect x="363" y="111" width="6" height="6" fill="#757575"/><rect x="369" y="111" width="5" height="6" fill="#757575"/><rect x="374" y="111" width="6" height="6" fill="#757575"/><rect x="380" y="111" width="6" height="6" fill="#808080"/><rect x="386" y="111" width="6" height="6" fill="#6a6a6a"/><rect x="392" y="111" width="6" height="6" fill="#909090"/><rect x="398" y="111" width="6" height="6" fill="#bbbbbb"/><rect x="322" y="117" width="6" height="5" fill="#444444"/><rect x="328" y="117" width="5" height="5" fill="#888888"/><rect x="333" y="117" width="6" height="5" fill="#7c7c7c"/><rect x="339" y="117" width="6" height="5" fill="#757575"/><rect x="345" y="117" width="6" height="5" fill="#505050"/><rect x="351" y="117" width="6" height="5" fill="#606060"/><rect x="357" y="117" width="6" height="5" fill="#606060"/><rect x="363" y="117" width="6" height="5" fill="#6a6a6a"/><rect x="369" y="117" width="5" height="5" fill="#606060"/><rect x="374" y="117" width="6" height="5" fill="#6a6a6a"/><rect x="380" y="117" width="6" height="5" fill="#707070"/><rect x="386" y="117" width="6" height="5" fill="#808080"/><rect x="392" y="117" width="6" height="5" fill="#888888"/><rect x="398" y="117" width="6" height="5" fill="#aaaaaa"/><rect x="404" y="117" width="6" height="5" fill="#141414"/><rect x="322" y="122" width="6" height="6" fill="#505050"/><rect x="328" y="122" width="5" height="6" fill="#808080"/><rect x="333" y="122" width="6" height="6" fill="#757575"/><rect x="339" y="122" width="6" height="6" fill="#5a5a5a"/><rect x="345" y="122" width="6" height="6" fill="#505050"/><rect x="351" y="122" width="6" height="6" fill="#555555"/><rect x="357" y="122" width="6" height="6" fill="#555555"/><rect x="363" y="122" width="6" height="6" fill="#555555"/><rect x="369" y="122" width="5" height="6" fill="#606060"/><rect x="374" y="122" width="6" height="6" fill="#6a6a6a"/><rect x="380" y="122" width="6" height="6" fill="#707070"/><rect x="386" y="122" width="6" height="6" fill="#707070"/><rect x="392" y="122" width="6" height="6" fill="#888888"/><rect x="398" y="122" width="6" height="6" fill="#999999"/><rect x="404" y="122" width="6" height="6" fill="#2a2a2a"/><rect x="322" y="128" width="6" height="6" fill="#444444"/><rect x="328" y="128" width="5" height="6" fill="#7c7c7c"/><rect x="333" y="128" width="6" height="6" fill="#6a6a6a"/><rect x="339" y="128" width="6" height="6" fill="#606060"/><rect x="345" y="128" width="6" height="6" fill="#606060"/><rect x="351" y="128" width="6" height="6" fill="#555555"/><rect x="357" y="128" width="6" height="6" fill="#555555"/><rect x="363" y="128" width="6" height="6" fill="#4a4a4a"/><rect x="369" y="128" width="5" height="6" fill="#4a4a4a"/><rect x="374" y="128" width="6" height="6" fill="#555555"/><rect x="380" y="128" width="6" height="6" fill="#606060"/><rect x="386" y="128" width="6" height="6" fill="#707070"/><rect x="392" y="128" width="6" height="6" fill="#808080"/><rect x="398" y="128" width="6" height="6" fill="#909090"/><rect x="404" y="128" width="6" height="6" fill="#303030"/><rect x="322" y="134" width="6" height="6" fill="#3a3a3a"/><rect x="328" y="134" width="5" height="6" fill="#757575"/><rect x="333" y="134" width="6" height="6" fill="#6a6a6a"/><rect x="339" y="134" width="6" height="6" fill="#606060"/><rect x="345" y="134" width="6" height="6" fill="#555555"/><rect x="351" y="134" width="6" height="6" fill="#555555"/><rect x="357" y="134" width="6" height="6" fill="#555555"/><rect x="363" y="134" width="6" height="6" fill="#4a4a4a"/><rect x="369" y="134" width="5" height="6" fill="#4a4a4a"/><rect x="374" y="134" width="6" height="6" fill="#555555"/><rect x="380" y="134" width="6" height="6" fill="#6a6a6a"/><rect x="386" y="134" width="6" height="6" fill="#6a6a6a"/><rect x="392" y="134" width="6" height="6" fill="#808080"/><rect x="398" y="134" width="6" height="6" fill="#909090"/><rect x="404" y="134" width="6" height="6" fill="#161616"/><rect x="322" y="140" width="6" height="6" fill="#202020"/><rect x="328" y="140" width="5" height="6" fill="#757575"/><rect x="333" y="140" width="6" height="6" fill="#6a6a6a"/><rect x="339" y="140" width="6" height="6" fill="#606060"/><rect x="345" y="140" width="6" height="6" fill="#606060"/><rect x="351" y="140" width="6" height="6" fill="#555555"/><rect x="357" y="140" width="6" height="6" fill="#4a4a4a"/><rect x="363" y="140" width="6" height="6" fill="#4a4a4a"/><rect x="369" y="140" width="5" height="6" fill="#4a4a4a"/><rect x="374" y="140" width="6" height="6" fill="#555555"/><rect x="380" y="140" width="6" height="6" fill="#606060"/><rect x="386" y="140" width="6" height="6" fill="#606060"/><rect x="392" y="140" width="6" height="6" fill="#808080"/><rect x="398" y="140" width="6" height="6" fill="#909090"/><rect x="328" y="146" width="5" height="6" fill="#555555"/><rect x="333" y="146" width="6" height="6" fill="#6a6a6a"/><rect x="339" y="146" width="6" height="6" fill="#606060"/><rect x="345" y="146" width="6" height="6" fill="#4a4a4a"/><rect x="351" y="146" width="6" height="6" fill="#4a4a4a"/><rect x="357" y="146" width="6" height="6" fill="#555555"/><rect x="363" y="146" width="6" height="6" fill="#555555"/><rect x="369" y="146" width="5" height="6" fill="#555555"/><rect x="374" y="146" width="6" height="6" fill="#4a4a4a"/><rect x="380" y="146" width="6" height="6" fill="#555555"/><rect x="386" y="146" width="6" height="6" fill="#606060"/><rect x="392" y="146" width="6" height="6" fill="#909090"/><rect x="398" y="146" width="6" height="6" fill="#aaaaaa"/><rect x="328" y="152" width="5" height="5" fill="#121212"/><rect x="333" y="152" width="6" height="5" fill="#707070"/><rect x="339" y="152" width="6" height="5" fill="#606060"/><rect x="345" y="152" width="6" height="5" fill="#555555"/><rect x="351" y="152" width="6" height="5" fill="#555555"/><rect x="357" y="152" width="6" height="5" fill="#555555"/><rect x="363" y="152" width="6" height="5" fill="#505050"/><rect x="369" y="152" width="5" height="5" fill="#4a4a4a"/><rect x="374" y="152" width="6" height="5" fill="#555555"/><rect x="380" y="152" width="6" height="5" fill="#555555"/><rect x="386" y="152" width="6" height="5" fill="#7c7c7c"/><rect x="392" y="152" width="6" height="5" fill="#999999"/><rect x="398" y="152" width="6" height="5" fill="#909090"/><rect x="333" y="157" width="6" height="6" fill="#222222"/><rect x="339" y="157" width="6" height="6" fill="#707070"/><rect x="345" y="157" width="6" height="6" fill="#707070"/><rect x="351" y="157" width="6" height="6" fill="#6a6a6a"/><rect x="357" y="157" width="6" height="6" fill="#606060"/><rect x="363" y="157" width="6" height="6" fill="#6a6a6a"/><rect x="369" y="157" width="5" height="6" fill="#757575"/><rect x="374" y="157" width="6" height="6" fill="#808080"/><rect x="380" y="157" width="6" height="6" fill="#888888"/><rect x="386" y="157" width="6" height="6" fill="#999999"/><rect x="392" y="157" width="6" height="6" fill="#999999"/><rect x="398" y="157" width="6" height="6" fill="#141414"/><rect x="339" y="163" width="6" height="6" fill="#1a1a1a"/><rect x="345" y="163" width="6" height="6" fill="#606060"/><rect x="351" y="163" width="6" height="6" fill="#757575"/><rect x="357" y="163" width="6" height="6" fill="#757575"/><rect x="363" y="163" width="6" height="6" fill="#757575"/><rect x="369" y="163" width="5" height="6" fill="#808080"/><rect x="374" y="163" width="6" height="6" fill="#888888"/><rect x="380" y="163" width="6" height="6" fill="#909090"/><rect x="386" y="163" width="6" height="6" fill="#808080"/><rect x="392" y="163" width="6" height="6" fill="#141414"/><rect x="351" y="169" width="6" height="6" fill="#222222"/><rect x="357" y="169" width="6" height="6" fill="#505050"/><rect x="363" y="169" width="6" height="6" fill="#606060"/><rect x="369" y="169" width="5" height="6" fill="#6a6a6a"/><rect x="374" y="169" width="6" height="6" fill="#606060"/><rect x="380" y="169" width="6" height="6" fill="#2a2a2a"/><rect x="99" y="327" width="6" height="6" fill="#141414"/><rect x="105" y="327" width="6" height="6" fill="#222222"/><rect x="111" y="327" width="6" height="6" fill="#262626"/><rect x="117" y="327" width="6" height="6" fill="#2a2a2a"/><rect x="123" y="327" width="6" height="6" fill="#2a2a2a"/><rect x="129" y="327" width="6" height="6" fill="#262626"/><rect x="135" y="327" width="5" height="6" fill="#1c1c1c"/><rect x="140" y="327" width="6" height="6" fill="#141414"/><rect x="88" y="333" width="6" height="6" fill="#1e1e1e"/><rect x="94" y="333" width="5" height="6" fill="#2e2e2e"/><rect x="99" y="333" width="6" height="6" fill="#303030"/><rect x="105" y="333" width="6" height="6" fill="#303030"/><rect x="111" y="333" width="6" height="6" fill="#333333"/><rect x="117" y="333" width="6" height="6" fill="#3a3a3a"/><rect x="123" y="333" width="6" height="6" fill="#262626"/><rect x="129" y="333" width="6" height="6" fill="#222222"/><rect x="135" y="333" width="5" height="6" fill="#262626"/><rect x="140" y="333" width="6" height="6" fill="#262626"/><rect x="146" y="333" width="6" height="6" fill="#303030"/><rect x="152" y="333" width="6" height="6" fill="#1e1e1e"/><rect x="82" y="339" width="6" height="6" fill="#1a1a1a"/><rect x="88" y="339" width="6" height="6" fill="#2a2a2a"/><rect x="94" y="339" width="5" height="6" fill="#303030"/><rect x="99" y="339" width="6" height="6" fill="#333333"/><rect x="105" y="339" width="6" height="6" fill="#444444"/><rect x="111" y="339" width="6" height="6" fill="#444444"/><rect x="117" y="339" width="6" height="6" fill="#2a2a2a"/><rect x="123" y="339" width="6" height="6" fill="#161616"/><rect x="129" y="339" width="6" height="6" fill="#222222"/><rect x="135" y="339" width="5" height="6" fill="#444444"/><rect x="140" y="339" width="6" height="6" fill="#484848"/><rect x="146" y="339" width="6" height="6" fill="#444444"/><rect x="152" y="339" width="6" height="6" fill="#3a3a3a"/><rect x="158" y="339" width="6" height="6" fill="#1a1a1a"/><rect x="82" y="345" width="6" height="5" fill="#222222"/><rect x="88" y="345" width="6" height="5" fill="#2e2e2e"/><rect x="94" y="345" width="5" height="5" fill="#2e2e2e"/><rect x="99" y="345" width="6" height="5" fill="#3a3a3a"/><rect x="105" y="345" width="6" height="5" fill="#444444"/><rect x="111" y="345" width="6" height="5" fill="#303030"/><rect x="117" y="345" width="6" height="5" fill="#1c1c1c"/><rect x="123" y="345" width="6" height="5" fill="#161616"/><rect x="129" y="345" width="6" height="5" fill="#2a2a2a"/><rect x="135" y="345" width="5" height="5" fill="#2a2a2a"/><rect x="140" y="345" width="6" height="5" fill="#303030"/><rect x="146" y="345" width="6" height="5" fill="#3a3a3a"/><rect x="152" y="345" width="6" height="5" fill="#2e2e2e"/><rect x="158" y="345" width="6" height="5" fill="#1e1e1e"/><rect x="363" y="321" width="6" height="6" fill="#202020"/><rect x="369" y="321" width="5" height="6" fill="#202020"/><rect x="345" y="327" width="6" height="6" fill="#141414"/><rect x="351" y="327" width="6" height="6" fill="#262626"/><rect x="357" y="327" width="6" height="6" fill="#262626"/><rect x="363" y="327" width="6" height="6" fill="#262626"/><rect x="369" y="327" width="5" height="6" fill="#262626"/><rect x="374" y="327" width="6" height="6" fill="#262626"/><rect x="380" y="327" width="6" height="6" fill="#262626"/><rect x="386" y="327" width="6" height="6" fill="#141414"/><rect x="333" y="333" width="6" height="6" fill="#2a2a2a"/><rect x="339" y="333" width="6" height="6" fill="#2e2e2e"/><rect x="345" y="333" width="6" height="6" fill="#2a2a2a"/><rect x="351" y="333" width="6" height="6" fill="#262626"/><rect x="357" y="333" width="6" height="6" fill="#262626"/><rect x="363" y="333" width="6" height="6" fill="#1c1c1c"/><rect x="369" y="333" width="5" height="6" fill="#1c1c1c"/><rect x="374" y="333" width="6" height="6" fill="#1c1c1c"/><rect x="380" y="333" width="6" height="6" fill="#222222"/><rect x="386" y="333" width="6" height="6" fill="#262626"/><rect x="392" y="333" width="6" height="6" fill="#222222"/><rect x="398" y="333" width="6" height="6" fill="#1a1a1a"/><rect x="328" y="339" width="5" height="6" fill="#1a1a1a"/><rect x="333" y="339" width="6" height="6" fill="#333333"/><rect x="339" y="339" width="6" height="6" fill="#333333"/><rect x="345" y="339" width="6" height="6" fill="#2e2e2e"/><rect x="351" y="339" width="6" height="6" fill="#222222"/><rect x="357" y="339" width="6" height="6" fill="#1c1c1c"/><rect x="363" y="339" width="6" height="6" fill="#1c1c1c"/><rect x="369" y="339" width="5" height="6" fill="#333333"/><rect x="374" y="339" width="6" height="6" fill="#1c1c1c"/><rect x="380" y="339" width="6" height="6" fill="#1c1c1c"/><rect x="386" y="339" width="6" height="6" fill="#2e2e2e"/><rect x="392" y="339" width="6" height="6" fill="#444444"/><rect x="398" y="339" width="6" height="6" fill="#555555"/><rect x="322" y="345" width="6" height="5" fill="#141414"/><rect x="328" y="345" width="5" height="5" fill="#1c1c1c"/><rect x="333" y="345" width="6" height="5" fill="#222222"/><rect x="339" y="345" width="6" height="5" fill="#222222"/><rect x="345" y="345" width="6" height="5" fill="#2a2a2a"/><rect x="351" y="345" width="6" height="5" fill="#222222"/><rect x="357" y="345" width="6" height="5" fill="#1c1c1c"/><rect x="363" y="345" width="6" height="5" fill="#1c1c1c"/><rect x="369" y="345" width="5" height="5" fill="#1c1c1c"/><rect x="374" y="345" width="6" height="5" fill="#1c1c1c"/><rect x="380" y="345" width="6" height="5" fill="#222222"/><rect x="386" y="345" width="6" height="5" fill="#555555"/><rect x="392" y="345" width="6" height="5" fill="#606060"/><rect x="398" y="345" width="6" height="5" fill="#5a5a5a"/><rect x="322" y="298" width="6" height="6" fill="#222222"/><rect x="439" y="292" width="6" height="6" fill="#141414"/></svg>
<div class="a" style="left:250px;top:380px;width:235px;height:1px;background:#ffff00;"></div>
<div class="a" style="left:250px;top:614px;width:235px;height:1px;background:#ffff00;"></div>
<div class="a" style="left:250px;top:380px;width:1px;height:235px;background:#ffff00;"></div>
<div class="a" style="left:484px;top:380px;width:1px;height:235px;background:#ffff00;"></div>
<svg class="a" style="left:244px;top:374px" width="474" height="350"><circle cx="125.5" cy="125.5" r="61" fill="none" stroke="#ff0000" stroke-width="1" shape-rendering="crispEdges"/></svg>
</body></html>
